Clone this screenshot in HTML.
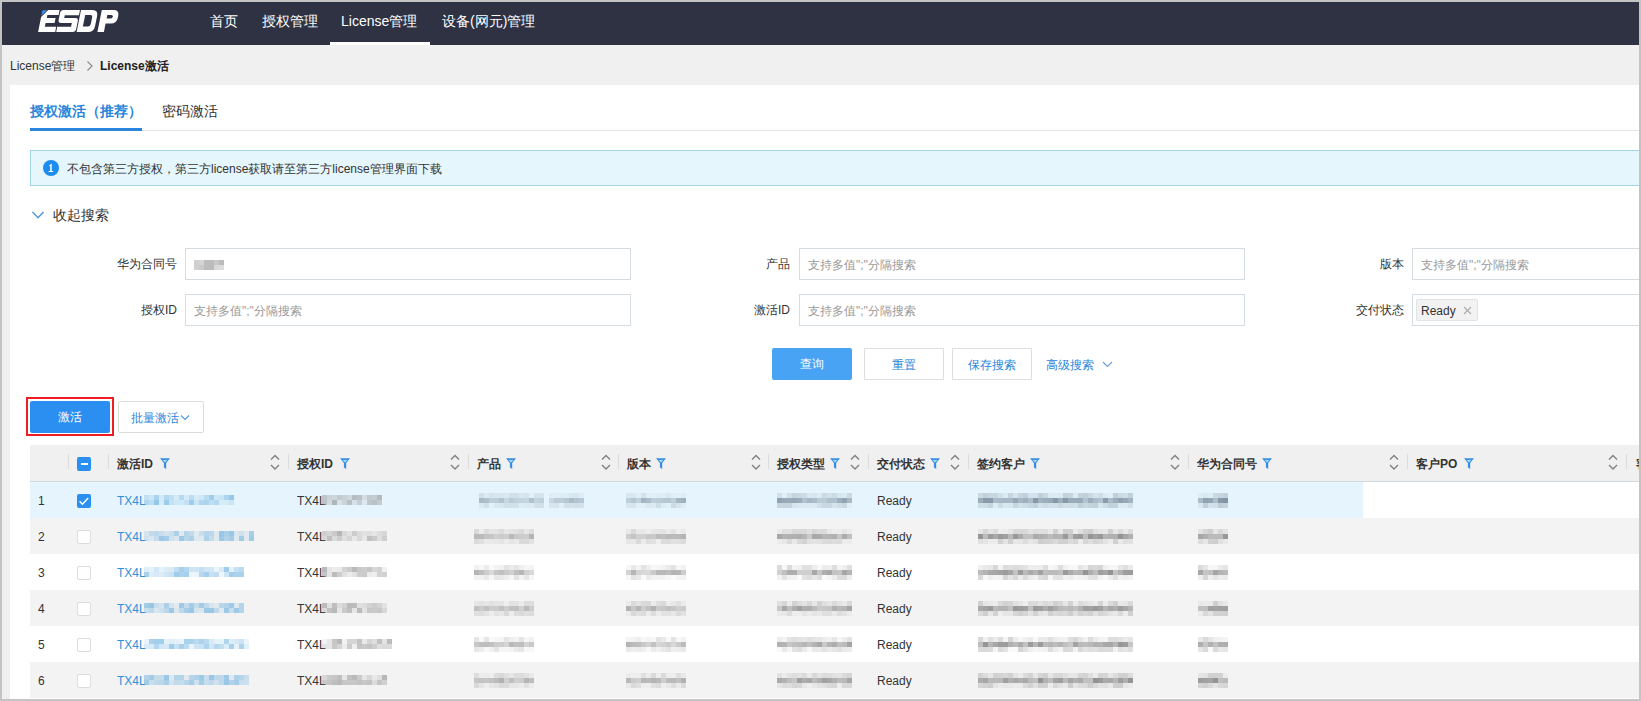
<!DOCTYPE html><html><head><meta charset="utf-8"><style>
*{box-sizing:border-box;margin:0;padding:0}
html,body{width:1641px;height:701px;overflow:hidden;background:#c4c4c4;font-family:"Liberation Sans",sans-serif;}
.abs{position:absolute}
#frame{position:absolute;left:2px;top:2px;width:1637px;height:697px;background:#f0f0f0;overflow:hidden}
#hdr{position:absolute;left:0;top:0;width:1637px;height:43px;background:#2e3243}
.logo{position:absolute;left:36px;top:2px;color:#fff;font:italic bold 30px/38px "Liberation Sans",sans-serif;letter-spacing:-1px}
.nav{position:absolute;top:9px;color:#fff;font-size:14px;line-height:20px;white-space:nowrap}
.navline{position:absolute;left:328px;top:40px;width:100px;height:3px;background:#fff}
.crumb{position:absolute;top:55px;font-size:12px;line-height:18px;color:#333;white-space:nowrap}
#card{position:absolute;left:10px;top:85px;width:1629px;height:614px;background:#fff}
.t{position:absolute;white-space:nowrap}
.mz{position:absolute;filter:blur(0.6px)}
.inp{position:absolute;height:32px;border:1px solid #d6dde2;background:#fff;border-radius:0}
.ph{position:absolute;left:8px;top:8px;font-size:12px;line-height:16px;color:#9a9a9a;white-space:nowrap}
.lbl{position:absolute;font-size:12px;line-height:16px;color:#333;text-align:right;white-space:nowrap}
.btn{position:absolute;height:32px;font-size:12px;line-height:30px;text-align:center;border-radius:2px;white-space:nowrap;padding-top:1px}
.th{position:absolute;top:0;height:36px;font-size:12px;font-weight:bold;color:#333;line-height:36px}
.sep{position:absolute;width:1px;height:15px;background:#dcdcdc}
.row{position:absolute;left:0;width:1629px;height:36px}
.cell{position:absolute;font-size:12px;line-height:16px;white-space:nowrap}
</style></head><body><div id="frame"><div id="hdr"><svg class="abs" style="left:-2px;top:-2px" width="130" height="44"><g transform="translate(0,10) matrix(1,0,-0.2,1,0,0)"><path fill="#3d8ff0" d="M42.6 0.3 H47.2 L42.6 5.6 Z"/><path fill="#fdfdfd" fill-rule="evenodd" d="M48.2 0 H59.6 V5 H48.4 V7.9 H57.2 V13 H48.2 V16.8 H59.6 V22 H42.5 V6.9 Z M63.6 0 H80 V5.2 H65.8 V7.9 H77 Q80 7.9 80 10.9 V19 Q80 22 77 22 H60.6 V16.8 H74.4 V13 H63.6 Q60.6 12.8 60.6 9.8 V3 Q60.6 0 63.6 0 Z M81 0 H92.5 Q98.3 0 98.3 6 V16 Q98.3 22 92.5 22 H81 Z M86.2 5 H91.5 Q93.6 5 93.6 7.5 V14 Q93.6 16.6 91 16.6 H86.2 Z M101.8 0 H113.6 Q119.4 0 119.4 5.8 V7.8 Q119.4 13.6 113.6 13.6 H108.3 V22 H101.8 Z M108.3 5 H112.2 Q114.2 5 114.2 6.7 Q114.2 8.4 112.2 8.4 H108.3 Z"/></g></svg><div class="nav" style="left:208px">首页</div><div class="nav" style="left:260px">授权管理</div><div class="nav" style="left:339px">License管理</div><div class="nav" style="left:440px">设备(网元)管理</div><div class="navline"></div></div><div class="crumb" style="left:8px">License管理</div><svg class="abs" style="left:84px;top:58px" width="8" height="12"><path d="M1.5 1.5 L6 6 L1.5 10.5" fill="none" stroke="#888" stroke-width="1.1"/></svg><div class="crumb" style="left:98px;font-weight:bold;color:#222">License激活</div></div><div id="card"></div><div class="t" style="left:30px;top:102px;font-size:14px;line-height:18px;color:#2a86dc;font-weight:bold">授权激活（推荐）</div><div class="t" style="left:162px;top:102px;font-size:14px;line-height:18px;color:#333">密码激活</div><div class="abs" style="left:30px;top:130px;width:1611px;height:1px;background:#e4e4e4"></div><div class="abs" style="left:30px;top:128px;width:112px;height:3px;background:#2a86dc"></div><div class="abs" style="left:30px;top:150px;width:1620px;height:36px;background:#e5f6fc;border:1px solid #a3d6e8"></div><svg class="abs" style="left:43px;top:160px" width="16" height="16"><circle cx="8" cy="8" r="8" fill="#1d8cf0"/><path d="M6.3 5.3 L8.7 3.6 V10.9 H10.2 V12.1 H5.6 V10.9 H7.2 V6.1 L6.3 6.3 Z" fill="#fff"/></svg><div class="t" style="left:67px;top:161px;font-size:12px;line-height:16px;color:#333">不包含第三方授权，第三方license获取请至第三方license管理界面下载</div><svg class="abs" style="left:31px;top:210px" width="14" height="11"><path d="M1.5 2 L7 7.8 L12.5 2" fill="none" stroke="#4f95d6" stroke-width="1.4"/></svg><div class="t" style="left:53px;top:207px;font-size:13.6px;line-height:18px;color:#333">收起搜索</div><div class="lbl" style="right:1464px;top:256px">华为合同号</div><div class="inp" style="left:185px;top:248px;width:446px"></div><svg class="mz" style="left:194px;top:260px" width="30" height="10"><rect x="0" y="0" width="5" height="5" fill="#d0d0d0"/><rect x="5" y="0" width="5" height="5" fill="#d5d5d5"/><rect x="10" y="0" width="5" height="5" fill="#bdbdbd"/><rect x="15" y="0" width="5" height="5" fill="#bdbdbd"/><rect x="20" y="0" width="5" height="5" fill="#c8c8c8"/><rect x="25" y="0" width="5" height="5" fill="#bcbcbc"/><rect x="0" y="5" width="5" height="5" fill="#d0d0d0"/><rect x="5" y="5" width="5" height="5" fill="#cacaca"/><rect x="10" y="5" width="5" height="5" fill="#bdbdbd"/><rect x="15" y="5" width="5" height="5" fill="#bababa"/><rect x="20" y="5" width="5" height="5" fill="#dadada"/><rect x="25" y="5" width="5" height="5" fill="#dcdcdc"/></svg><div class="lbl" style="right:1464px;top:302px">授权ID</div><div class="inp" style="left:185px;top:294px;width:446px"><div class="ph">支持多值";"分隔搜索</div></div><div class="lbl" style="right:851px;top:256px">产品</div><div class="inp" style="left:799px;top:248px;width:446px"><div class="ph">支持多值";"分隔搜索</div></div><div class="lbl" style="right:851px;top:302px">激活ID</div><div class="inp" style="left:799px;top:294px;width:446px"><div class="ph">支持多值";"分隔搜索</div></div><div class="lbl" style="right:237px;top:256px">版本</div><div class="inp" style="left:1412px;top:248px;width:240px"><div class="ph">支持多值";"分隔搜索</div></div><div class="lbl" style="right:237px;top:302px">交付状态</div><div class="inp" style="left:1412px;top:294px;width:240px"><div class="abs" style="left:3px;top:4px;width:62px;height:22px;background:#f2f2f2;border:1px solid #e3e3e3;border-radius:2px"></div><div class="t" style="left:8px;top:8px;font-size:12px;line-height:16px;color:#333">Ready</div><svg class="abs" style="left:50px;top:11px" width="9" height="9"><path d="M1 1 L8 8 M8 1 L1 8" stroke="#aaa" stroke-width="1.1"/></svg></div><div class="btn" style="left:772px;top:348px;width:80px;background:#48a3f5;color:#fff;line-height:31px">查询</div><div class="btn" style="left:864px;top:348px;width:80px;border:1px solid #dedede;border-radius:0;color:#2a86dc;background:#fff">重置</div><div class="btn" style="left:952px;top:348px;width:80px;border:1px solid #dedede;border-radius:0;color:#2a86dc;background:#fff">保存搜索</div><div class="t" style="left:1046px;top:357px;font-size:12px;line-height:16px;color:#2a86dc">高级搜索</div><svg class="abs" style="left:1102px;top:361px" width="11" height="7"><path d="M1 1 L5.5 5.5 L10 1" fill="none" stroke="#6d9ccc" stroke-width="1.1"/></svg><div class="abs" style="left:26px;top:397px;width:88px;height:39px;border:2px solid #ee1c25"></div><div class="btn" style="left:30px;top:401px;width:80px;background:#2a8ff0;color:#fff;line-height:31px">激活</div><div class="btn" style="left:118px;top:401px;width:86px;border:1px solid #dcdcdc;color:#2a86dc;background:#fff;text-align:left;padding-left:12px">批量激活<svg style="position:absolute;left:61px;top:12px" width="10" height="8"><path d="M1 1.5 L5 5.5 L9 1.5" fill="none" stroke="#4a9ae0" stroke-width="1.1"/></svg></div><div class="abs" style="left:30px;top:445px;width:1611px;height:37px;background:#f0f0f0;border-bottom:1px solid #cfd9de"></div><div class="sep" style="left:68px;top:454px"></div><div class="sep" style="left:108px;top:454px"></div><div class="sep" style="left:288px;top:454px"></div><div class="sep" style="left:468px;top:454px"></div><div class="sep" style="left:618px;top:454px"></div><div class="sep" style="left:768px;top:454px"></div><div class="sep" style="left:868px;top:454px"></div><div class="sep" style="left:968px;top:454px"></div><div class="sep" style="left:1188px;top:454px"></div><div class="sep" style="left:1407px;top:454px"></div><div class="sep" style="left:1626px;top:454px"></div><div class="abs" style="left:77px;top:457px;width:14px;height:14px;background:#2a8ff0;border-radius:2px"></div><div class="abs" style="left:80.5px;top:463px;width:7px;height:2px;background:#fff"></div><div class="t" style="left:117px;top:455px;font-size:12px;line-height:18px;font-weight:bold;color:#333">激活ID</div><svg class="abs" style="left:160px;top:458px" width="10" height="11" viewBox="0 0 10 11"><path d="M0 0.3 H10 L6.2 5 V11 L3.9 9.6 V5 Z" fill="#3a8ee0"/><path d="M2.6 2 H7.4 L5 4.6 Z" fill="#9fdcf5"/></svg><svg class="abs" style="left:270px;top:454px" width="10" height="17" viewBox="0 0 10 17"><path d="M1 5.5 L5 1.5 L9 5.5 M1 11 L5 15 L9 11" fill="none" stroke="#808080" stroke-width="1.4"/></svg><div class="t" style="left:297px;top:455px;font-size:12px;line-height:18px;font-weight:bold;color:#333">授权ID</div><svg class="abs" style="left:340px;top:458px" width="10" height="11" viewBox="0 0 10 11"><path d="M0 0.3 H10 L6.2 5 V11 L3.9 9.6 V5 Z" fill="#3a8ee0"/><path d="M2.6 2 H7.4 L5 4.6 Z" fill="#9fdcf5"/></svg><svg class="abs" style="left:450px;top:454px" width="10" height="17" viewBox="0 0 10 17"><path d="M1 5.5 L5 1.5 L9 5.5 M1 11 L5 15 L9 11" fill="none" stroke="#808080" stroke-width="1.4"/></svg><div class="t" style="left:477px;top:455px;font-size:12px;line-height:18px;font-weight:bold;color:#333">产品</div><svg class="abs" style="left:506px;top:458px" width="10" height="11" viewBox="0 0 10 11"><path d="M0 0.3 H10 L6.2 5 V11 L3.9 9.6 V5 Z" fill="#3a8ee0"/><path d="M2.6 2 H7.4 L5 4.6 Z" fill="#9fdcf5"/></svg><svg class="abs" style="left:601px;top:454px" width="10" height="17" viewBox="0 0 10 17"><path d="M1 5.5 L5 1.5 L9 5.5 M1 11 L5 15 L9 11" fill="none" stroke="#808080" stroke-width="1.4"/></svg><div class="t" style="left:627px;top:455px;font-size:12px;line-height:18px;font-weight:bold;color:#333">版本</div><svg class="abs" style="left:656px;top:458px" width="10" height="11" viewBox="0 0 10 11"><path d="M0 0.3 H10 L6.2 5 V11 L3.9 9.6 V5 Z" fill="#3a8ee0"/><path d="M2.6 2 H7.4 L5 4.6 Z" fill="#9fdcf5"/></svg><svg class="abs" style="left:751px;top:454px" width="10" height="17" viewBox="0 0 10 17"><path d="M1 5.5 L5 1.5 L9 5.5 M1 11 L5 15 L9 11" fill="none" stroke="#808080" stroke-width="1.4"/></svg><div class="t" style="left:777px;top:455px;font-size:12px;line-height:18px;font-weight:bold;color:#333">授权类型</div><svg class="abs" style="left:830px;top:458px" width="10" height="11" viewBox="0 0 10 11"><path d="M0 0.3 H10 L6.2 5 V11 L3.9 9.6 V5 Z" fill="#3a8ee0"/><path d="M2.6 2 H7.4 L5 4.6 Z" fill="#9fdcf5"/></svg><svg class="abs" style="left:850px;top:454px" width="10" height="17" viewBox="0 0 10 17"><path d="M1 5.5 L5 1.5 L9 5.5 M1 11 L5 15 L9 11" fill="none" stroke="#808080" stroke-width="1.4"/></svg><div class="t" style="left:877px;top:455px;font-size:12px;line-height:18px;font-weight:bold;color:#333">交付状态</div><svg class="abs" style="left:930px;top:458px" width="10" height="11" viewBox="0 0 10 11"><path d="M0 0.3 H10 L6.2 5 V11 L3.9 9.6 V5 Z" fill="#3a8ee0"/><path d="M2.6 2 H7.4 L5 4.6 Z" fill="#9fdcf5"/></svg><svg class="abs" style="left:950px;top:454px" width="10" height="17" viewBox="0 0 10 17"><path d="M1 5.5 L5 1.5 L9 5.5 M1 11 L5 15 L9 11" fill="none" stroke="#808080" stroke-width="1.4"/></svg><div class="t" style="left:977px;top:455px;font-size:12px;line-height:18px;font-weight:bold;color:#333">签约客户</div><svg class="abs" style="left:1030px;top:458px" width="10" height="11" viewBox="0 0 10 11"><path d="M0 0.3 H10 L6.2 5 V11 L3.9 9.6 V5 Z" fill="#3a8ee0"/><path d="M2.6 2 H7.4 L5 4.6 Z" fill="#9fdcf5"/></svg><svg class="abs" style="left:1170px;top:454px" width="10" height="17" viewBox="0 0 10 17"><path d="M1 5.5 L5 1.5 L9 5.5 M1 11 L5 15 L9 11" fill="none" stroke="#808080" stroke-width="1.4"/></svg><div class="t" style="left:1197px;top:455px;font-size:12px;line-height:18px;font-weight:bold;color:#333">华为合同号</div><svg class="abs" style="left:1262px;top:458px" width="10" height="11" viewBox="0 0 10 11"><path d="M0 0.3 H10 L6.2 5 V11 L3.9 9.6 V5 Z" fill="#3a8ee0"/><path d="M2.6 2 H7.4 L5 4.6 Z" fill="#9fdcf5"/></svg><svg class="abs" style="left:1389px;top:454px" width="10" height="17" viewBox="0 0 10 17"><path d="M1 5.5 L5 1.5 L9 5.5 M1 11 L5 15 L9 11" fill="none" stroke="#808080" stroke-width="1.4"/></svg><div class="t" style="left:1416px;top:455px;font-size:12px;line-height:18px;font-weight:bold;color:#333">客户PO</div><svg class="abs" style="left:1464px;top:458px" width="10" height="11" viewBox="0 0 10 11"><path d="M0 0.3 H10 L6.2 5 V11 L3.9 9.6 V5 Z" fill="#3a8ee0"/><path d="M2.6 2 H7.4 L5 4.6 Z" fill="#9fdcf5"/></svg><svg class="abs" style="left:1608px;top:454px" width="10" height="17" viewBox="0 0 10 17"><path d="M1 5.5 L5 1.5 L9 5.5 M1 11 L5 15 L9 11" fill="none" stroke="#808080" stroke-width="1.4"/></svg><div class="t" style="left:1636px;top:455px;font-size:12px;line-height:18px;font-weight:bold;color:#333">客</div><div class="abs" style="left:30px;top:482px;width:1333px;height:36px;background:#e6f5fd"></div><div class="cell" style="left:38px;top:493px;color:#333">1</div><div class="abs" style="left:77px;top:494px;width:14px;height:14px;background:#2a8ff0;border-radius:2px"></div><svg class="abs" style="left:77px;top:494px" width="14" height="14"><path d="M2.6 7.3 L5.4 10.2 L11.2 4" fill="none" stroke="#fff" stroke-width="1.5"/></svg><div class="cell" style="left:117px;top:493px;color:#2f8fd9">TX4L</div><svg class="mz" style="left:144px;top:495px" width="90" height="10"><g fill="#5aa8dc"><rect x="0" y="0" width="5" height="5" fill-opacity="0.26"/><rect x="5" y="0" width="5" height="5" fill-opacity="0.18"/><rect x="10" y="0" width="5" height="5" fill-opacity="0.43"/><rect x="15" y="0" width="5" height="5" fill-opacity="0.14"/><rect x="20" y="0" width="5" height="5" fill-opacity="0.37"/><rect x="25" y="0" width="5" height="5" fill-opacity="0.28"/><rect x="30" y="0" width="5" height="5" fill-opacity="0.13"/><rect x="35" y="0" width="5" height="5" fill-opacity="0.35"/><rect x="40" y="0" width="5" height="5" fill-opacity="0.12"/><rect x="45" y="0" width="5" height="5" fill-opacity="0.32"/><rect x="50" y="0" width="5" height="5" fill-opacity="0.13"/><rect x="55" y="0" width="5" height="5" fill-opacity="0.15"/><rect x="60" y="0" width="5" height="5" fill-opacity="0.31"/><rect x="65" y="0" width="5" height="5" fill-opacity="0.51"/><rect x="70" y="0" width="5" height="5" fill-opacity="0.16"/><rect x="75" y="0" width="5" height="5" fill-opacity="0.21"/><rect x="80" y="0" width="5" height="5" fill-opacity="0.41"/><rect x="85" y="0" width="5" height="5" fill-opacity="0.57"/><rect x="0" y="5" width="5" height="5" fill-opacity="0.39"/><rect x="5" y="5" width="5" height="5" fill-opacity="0.30"/><rect x="10" y="5" width="5" height="5" fill-opacity="0.59"/><rect x="15" y="5" width="5" height="5" fill-opacity="0.12"/><rect x="20" y="5" width="5" height="5" fill-opacity="0.53"/><rect x="25" y="5" width="5" height="5" fill-opacity="0.24"/><rect x="30" y="5" width="5" height="5" fill-opacity="0.17"/><rect x="35" y="5" width="5" height="5" fill-opacity="0.16"/><rect x="40" y="5" width="5" height="5" fill-opacity="0.25"/><rect x="45" y="5" width="5" height="5" fill-opacity="0.51"/><rect x="50" y="5" width="5" height="5" fill-opacity="0.19"/><rect x="55" y="5" width="5" height="5" fill-opacity="0.39"/><rect x="60" y="5" width="5" height="5" fill-opacity="0.42"/><rect x="65" y="5" width="5" height="5" fill-opacity="0.29"/><rect x="70" y="5" width="5" height="5" fill-opacity="0.37"/><rect x="75" y="5" width="5" height="5" fill-opacity="0.13"/><rect x="80" y="5" width="5" height="5" fill-opacity="0.13"/><rect x="85" y="5" width="5" height="5" fill-opacity="0.20"/></g></svg><div class="cell" style="left:297px;top:493px;color:#333">TX4L</div><svg class="mz" style="left:322px;top:495px" width="60" height="10"><g fill="#888"><rect x="0" y="0" width="5" height="5" fill-opacity="0.44"/><rect x="5" y="0" width="5" height="5" fill-opacity="0.31"/><rect x="10" y="0" width="5" height="5" fill-opacity="0.26"/><rect x="15" y="0" width="5" height="5" fill-opacity="0.39"/><rect x="20" y="0" width="5" height="5" fill-opacity="0.33"/><rect x="25" y="0" width="5" height="5" fill-opacity="0.25"/><rect x="30" y="0" width="5" height="5" fill-opacity="0.50"/><rect x="35" y="0" width="5" height="5" fill-opacity="0.45"/><rect x="40" y="0" width="5" height="5" fill-opacity="0.22"/><rect x="45" y="0" width="5" height="5" fill-opacity="0.39"/><rect x="50" y="0" width="5" height="5" fill-opacity="0.36"/><rect x="55" y="0" width="5" height="5" fill-opacity="0.54"/><rect x="0" y="5" width="5" height="5" fill-opacity="0.46"/><rect x="5" y="5" width="5" height="5" fill-opacity="0.24"/><rect x="10" y="5" width="5" height="5" fill-opacity="0.59"/><rect x="15" y="5" width="5" height="5" fill-opacity="0.16"/><rect x="20" y="5" width="5" height="5" fill-opacity="0.31"/><rect x="25" y="5" width="5" height="5" fill-opacity="0.48"/><rect x="30" y="5" width="5" height="5" fill-opacity="0.18"/><rect x="35" y="5" width="5" height="5" fill-opacity="0.34"/><rect x="40" y="5" width="5" height="5" fill-opacity="0.12"/><rect x="45" y="5" width="5" height="5" fill-opacity="0.43"/><rect x="50" y="5" width="5" height="5" fill-opacity="0.48"/><rect x="55" y="5" width="5" height="5" fill-opacity="0.39"/></g></svg><svg class="mz" style="left:479px;top:493px" width="65" height="15"><g fill="#789"><rect x="0" y="0" width="5" height="5" fill-opacity="0.19"/><rect x="5" y="0" width="5" height="5" fill-opacity="0.09"/><rect x="10" y="0" width="5" height="5" fill-opacity="0.16"/><rect x="15" y="0" width="5" height="5" fill-opacity="0.14"/><rect x="20" y="0" width="5" height="5" fill-opacity="0.13"/><rect x="25" y="0" width="5" height="5" fill-opacity="0.11"/><rect x="30" y="0" width="5" height="5" fill-opacity="0.18"/><rect x="35" y="0" width="5" height="5" fill-opacity="0.20"/><rect x="40" y="0" width="5" height="5" fill-opacity="0.12"/><rect x="45" y="0" width="5" height="5" fill-opacity="0.15"/><rect x="50" y="0" width="5" height="5" fill-opacity="0.04"/><rect x="55" y="0" width="5" height="5" fill-opacity="0.16"/><rect x="60" y="0" width="5" height="5" fill-opacity="0.15"/><rect x="0" y="5" width="5" height="5" fill-opacity="0.54"/><rect x="5" y="5" width="5" height="5" fill-opacity="0.49"/><rect x="10" y="5" width="5" height="5" fill-opacity="0.35"/><rect x="15" y="5" width="5" height="5" fill-opacity="0.37"/><rect x="20" y="5" width="5" height="5" fill-opacity="0.45"/><rect x="25" y="5" width="5" height="5" fill-opacity="0.28"/><rect x="30" y="5" width="5" height="5" fill-opacity="0.39"/><rect x="35" y="5" width="5" height="5" fill-opacity="0.32"/><rect x="40" y="5" width="5" height="5" fill-opacity="0.30"/><rect x="45" y="5" width="5" height="5" fill-opacity="0.29"/><rect x="50" y="5" width="5" height="5" fill-opacity="0.48"/><rect x="55" y="5" width="5" height="5" fill-opacity="0.30"/><rect x="60" y="5" width="5" height="5" fill-opacity="0.34"/><rect x="0" y="10" width="5" height="5" fill-opacity="0.10"/><rect x="5" y="10" width="5" height="5" fill-opacity="0.19"/><rect x="10" y="10" width="5" height="5" fill-opacity="0.04"/><rect x="15" y="10" width="5" height="5" fill-opacity="0.11"/><rect x="20" y="10" width="5" height="5" fill-opacity="0.13"/><rect x="25" y="10" width="5" height="5" fill-opacity="0.19"/><rect x="30" y="10" width="5" height="5" fill-opacity="0.18"/><rect x="35" y="10" width="5" height="5" fill-opacity="0.19"/><rect x="40" y="10" width="5" height="5" fill-opacity="0.08"/><rect x="45" y="10" width="5" height="5" fill-opacity="0.10"/><rect x="50" y="10" width="5" height="5" fill-opacity="0.09"/><rect x="55" y="10" width="5" height="5" fill-opacity="0.19"/><rect x="60" y="10" width="5" height="5" fill-opacity="0.20"/></g></svg><svg class="mz" style="left:549px;top:493px" width="35" height="15"><g fill="#789"><rect x="0" y="0" width="5" height="5" fill-opacity="0.06"/><rect x="5" y="0" width="5" height="5" fill-opacity="0.06"/><rect x="10" y="0" width="5" height="5" fill-opacity="0.07"/><rect x="15" y="0" width="5" height="5" fill-opacity="0.07"/><rect x="20" y="0" width="5" height="5" fill-opacity="0.12"/><rect x="25" y="0" width="5" height="5" fill-opacity="0.14"/><rect x="30" y="0" width="5" height="5" fill-opacity="0.08"/><rect x="0" y="5" width="5" height="5" fill-opacity="0.27"/><rect x="5" y="5" width="5" height="5" fill-opacity="0.38"/><rect x="10" y="5" width="5" height="5" fill-opacity="0.37"/><rect x="15" y="5" width="5" height="5" fill-opacity="0.42"/><rect x="20" y="5" width="5" height="5" fill-opacity="0.53"/><rect x="25" y="5" width="5" height="5" fill-opacity="0.46"/><rect x="30" y="5" width="5" height="5" fill-opacity="0.41"/><rect x="0" y="10" width="5" height="5" fill-opacity="0.14"/><rect x="5" y="10" width="5" height="5" fill-opacity="0.15"/><rect x="10" y="10" width="5" height="5" fill-opacity="0.04"/><rect x="15" y="10" width="5" height="5" fill-opacity="0.19"/><rect x="20" y="10" width="5" height="5" fill-opacity="0.17"/><rect x="25" y="10" width="5" height="5" fill-opacity="0.19"/><rect x="30" y="10" width="5" height="5" fill-opacity="0.17"/></g></svg><svg class="mz" style="left:626px;top:493px" width="60" height="15"><g fill="#789"><rect x="0" y="0" width="5" height="5" fill-opacity="0.12"/><rect x="5" y="0" width="5" height="5" fill-opacity="0.12"/><rect x="10" y="0" width="5" height="5" fill-opacity="0.06"/><rect x="15" y="0" width="5" height="5" fill-opacity="0.17"/><rect x="20" y="0" width="5" height="5" fill-opacity="0.05"/><rect x="25" y="0" width="5" height="5" fill-opacity="0.05"/><rect x="30" y="0" width="5" height="5" fill-opacity="0.08"/><rect x="35" y="0" width="5" height="5" fill-opacity="0.07"/><rect x="40" y="0" width="5" height="5" fill-opacity="0.11"/><rect x="45" y="0" width="5" height="5" fill-opacity="0.05"/><rect x="50" y="0" width="5" height="5" fill-opacity="0.04"/><rect x="55" y="0" width="5" height="5" fill-opacity="0.07"/><rect x="0" y="5" width="5" height="5" fill-opacity="0.35"/><rect x="5" y="5" width="5" height="5" fill-opacity="0.43"/><rect x="10" y="5" width="5" height="5" fill-opacity="0.32"/><rect x="15" y="5" width="5" height="5" fill-opacity="0.59"/><rect x="20" y="5" width="5" height="5" fill-opacity="0.51"/><rect x="25" y="5" width="5" height="5" fill-opacity="0.36"/><rect x="30" y="5" width="5" height="5" fill-opacity="0.39"/><rect x="35" y="5" width="5" height="5" fill-opacity="0.42"/><rect x="40" y="5" width="5" height="5" fill-opacity="0.43"/><rect x="45" y="5" width="5" height="5" fill-opacity="0.35"/><rect x="50" y="5" width="5" height="5" fill-opacity="0.58"/><rect x="55" y="5" width="5" height="5" fill-opacity="0.63"/><rect x="0" y="10" width="5" height="5" fill-opacity="0.13"/><rect x="5" y="10" width="5" height="5" fill-opacity="0.14"/><rect x="10" y="10" width="5" height="5" fill-opacity="0.05"/><rect x="15" y="10" width="5" height="5" fill-opacity="0.06"/><rect x="20" y="10" width="5" height="5" fill-opacity="0.11"/><rect x="25" y="10" width="5" height="5" fill-opacity="0.09"/><rect x="30" y="10" width="5" height="5" fill-opacity="0.21"/><rect x="35" y="10" width="5" height="5" fill-opacity="0.07"/><rect x="40" y="10" width="5" height="5" fill-opacity="0.04"/><rect x="45" y="10" width="5" height="5" fill-opacity="0.23"/><rect x="50" y="10" width="5" height="5" fill-opacity="0.15"/><rect x="55" y="10" width="5" height="5" fill-opacity="0.07"/></g></svg><svg class="mz" style="left:777px;top:493px" width="75" height="15"><g fill="#789"><rect x="0" y="0" width="5" height="5" fill-opacity="0.18"/><rect x="5" y="0" width="5" height="5" fill-opacity="0.05"/><rect x="10" y="0" width="5" height="5" fill-opacity="0.18"/><rect x="15" y="0" width="5" height="5" fill-opacity="0.29"/><rect x="20" y="0" width="5" height="5" fill-opacity="0.26"/><rect x="25" y="0" width="5" height="5" fill-opacity="0.22"/><rect x="30" y="0" width="5" height="5" fill-opacity="0.11"/><rect x="35" y="0" width="5" height="5" fill-opacity="0.14"/><rect x="40" y="0" width="5" height="5" fill-opacity="0.09"/><rect x="45" y="0" width="5" height="5" fill-opacity="0.24"/><rect x="50" y="0" width="5" height="5" fill-opacity="0.18"/><rect x="55" y="0" width="5" height="5" fill-opacity="0.24"/><rect x="60" y="0" width="5" height="5" fill-opacity="0.13"/><rect x="65" y="0" width="5" height="5" fill-opacity="0.10"/><rect x="70" y="0" width="5" height="5" fill-opacity="0.25"/><rect x="0" y="5" width="5" height="5" fill-opacity="0.76"/><rect x="5" y="5" width="5" height="5" fill-opacity="0.71"/><rect x="10" y="5" width="5" height="5" fill-opacity="0.69"/><rect x="15" y="5" width="5" height="5" fill-opacity="0.70"/><rect x="20" y="5" width="5" height="5" fill-opacity="0.67"/><rect x="25" y="5" width="5" height="5" fill-opacity="0.47"/><rect x="30" y="5" width="5" height="5" fill-opacity="0.58"/><rect x="35" y="5" width="5" height="5" fill-opacity="0.52"/><rect x="40" y="5" width="5" height="5" fill-opacity="0.39"/><rect x="45" y="5" width="5" height="5" fill-opacity="0.39"/><rect x="50" y="5" width="5" height="5" fill-opacity="0.49"/><rect x="55" y="5" width="5" height="5" fill-opacity="0.48"/><rect x="60" y="5" width="5" height="5" fill-opacity="0.65"/><rect x="65" y="5" width="5" height="5" fill-opacity="0.75"/><rect x="70" y="5" width="5" height="5" fill-opacity="0.55"/><rect x="0" y="10" width="5" height="5" fill-opacity="0.28"/><rect x="5" y="10" width="5" height="5" fill-opacity="0.29"/><rect x="10" y="10" width="5" height="5" fill-opacity="0.29"/><rect x="15" y="10" width="5" height="5" fill-opacity="0.14"/><rect x="20" y="10" width="5" height="5" fill-opacity="0.10"/><rect x="25" y="10" width="5" height="5" fill-opacity="0.10"/><rect x="30" y="10" width="5" height="5" fill-opacity="0.09"/><rect x="35" y="10" width="5" height="5" fill-opacity="0.09"/><rect x="40" y="10" width="5" height="5" fill-opacity="0.20"/><rect x="45" y="10" width="5" height="5" fill-opacity="0.27"/><rect x="50" y="10" width="5" height="5" fill-opacity="0.26"/><rect x="55" y="10" width="5" height="5" fill-opacity="0.16"/><rect x="60" y="10" width="5" height="5" fill-opacity="0.21"/><rect x="65" y="10" width="5" height="5" fill-opacity="0.25"/><rect x="70" y="10" width="5" height="5" fill-opacity="0.06"/></g></svg><div class="cell" style="left:877px;top:493px;color:#333">Ready</div><svg class="mz" style="left:978px;top:493px" width="155" height="15"><g fill="#789"><rect x="0" y="0" width="5" height="5" fill-opacity="0.25"/><rect x="5" y="0" width="5" height="5" fill-opacity="0.32"/><rect x="10" y="0" width="5" height="5" fill-opacity="0.28"/><rect x="15" y="0" width="5" height="5" fill-opacity="0.28"/><rect x="20" y="0" width="5" height="5" fill-opacity="0.19"/><rect x="25" y="0" width="5" height="5" fill-opacity="0.10"/><rect x="30" y="0" width="5" height="5" fill-opacity="0.29"/><rect x="35" y="0" width="5" height="5" fill-opacity="0.15"/><rect x="40" y="0" width="5" height="5" fill-opacity="0.29"/><rect x="45" y="0" width="5" height="5" fill-opacity="0.34"/><rect x="50" y="0" width="5" height="5" fill-opacity="0.17"/><rect x="55" y="0" width="5" height="5" fill-opacity="0.17"/><rect x="60" y="0" width="5" height="5" fill-opacity="0.33"/><rect x="65" y="0" width="5" height="5" fill-opacity="0.27"/><rect x="70" y="0" width="5" height="5" fill-opacity="0.10"/><rect x="75" y="0" width="5" height="5" fill-opacity="0.09"/><rect x="80" y="0" width="5" height="5" fill-opacity="0.10"/><rect x="85" y="0" width="5" height="5" fill-opacity="0.32"/><rect x="90" y="0" width="5" height="5" fill-opacity="0.29"/><rect x="95" y="0" width="5" height="5" fill-opacity="0.09"/><rect x="100" y="0" width="5" height="5" fill-opacity="0.30"/><rect x="105" y="0" width="5" height="5" fill-opacity="0.34"/><rect x="110" y="0" width="5" height="5" fill-opacity="0.25"/><rect x="115" y="0" width="5" height="5" fill-opacity="0.16"/><rect x="120" y="0" width="5" height="5" fill-opacity="0.21"/><rect x="125" y="0" width="5" height="5" fill-opacity="0.09"/><rect x="130" y="0" width="5" height="5" fill-opacity="0.05"/><rect x="135" y="0" width="5" height="5" fill-opacity="0.34"/><rect x="140" y="0" width="5" height="5" fill-opacity="0.24"/><rect x="145" y="0" width="5" height="5" fill-opacity="0.21"/><rect x="150" y="0" width="5" height="5" fill-opacity="0.33"/><rect x="0" y="5" width="5" height="5" fill-opacity="0.65"/><rect x="5" y="5" width="5" height="5" fill-opacity="0.84"/><rect x="10" y="5" width="5" height="5" fill-opacity="0.82"/><rect x="15" y="5" width="5" height="5" fill-opacity="0.54"/><rect x="20" y="5" width="5" height="5" fill-opacity="0.56"/><rect x="25" y="5" width="5" height="5" fill-opacity="0.58"/><rect x="30" y="5" width="5" height="5" fill-opacity="0.56"/><rect x="35" y="5" width="5" height="5" fill-opacity="0.71"/><rect x="40" y="5" width="5" height="5" fill-opacity="0.57"/><rect x="45" y="5" width="5" height="5" fill-opacity="0.64"/><rect x="50" y="5" width="5" height="5" fill-opacity="0.51"/><rect x="55" y="5" width="5" height="5" fill-opacity="0.86"/><rect x="60" y="5" width="5" height="5" fill-opacity="0.61"/><rect x="65" y="5" width="5" height="5" fill-opacity="0.66"/><rect x="70" y="5" width="5" height="5" fill-opacity="0.71"/><rect x="75" y="5" width="5" height="5" fill-opacity="0.86"/><rect x="80" y="5" width="5" height="5" fill-opacity="0.64"/><rect x="85" y="5" width="5" height="5" fill-opacity="0.86"/><rect x="90" y="5" width="5" height="5" fill-opacity="0.68"/><rect x="95" y="5" width="5" height="5" fill-opacity="0.69"/><rect x="100" y="5" width="5" height="5" fill-opacity="0.69"/><rect x="105" y="5" width="5" height="5" fill-opacity="0.46"/><rect x="110" y="5" width="5" height="5" fill-opacity="0.65"/><rect x="115" y="5" width="5" height="5" fill-opacity="0.53"/><rect x="120" y="5" width="5" height="5" fill-opacity="0.45"/><rect x="125" y="5" width="5" height="5" fill-opacity="0.81"/><rect x="130" y="5" width="5" height="5" fill-opacity="0.53"/><rect x="135" y="5" width="5" height="5" fill-opacity="0.66"/><rect x="140" y="5" width="5" height="5" fill-opacity="0.78"/><rect x="145" y="5" width="5" height="5" fill-opacity="0.70"/><rect x="150" y="5" width="5" height="5" fill-opacity="0.60"/><rect x="0" y="10" width="5" height="5" fill-opacity="0.21"/><rect x="5" y="10" width="5" height="5" fill-opacity="0.22"/><rect x="10" y="10" width="5" height="5" fill-opacity="0.29"/><rect x="15" y="10" width="5" height="5" fill-opacity="0.08"/><rect x="20" y="10" width="5" height="5" fill-opacity="0.22"/><rect x="25" y="10" width="5" height="5" fill-opacity="0.12"/><rect x="30" y="10" width="5" height="5" fill-opacity="0.13"/><rect x="35" y="10" width="5" height="5" fill-opacity="0.28"/><rect x="40" y="10" width="5" height="5" fill-opacity="0.20"/><rect x="45" y="10" width="5" height="5" fill-opacity="0.22"/><rect x="50" y="10" width="5" height="5" fill-opacity="0.28"/><rect x="55" y="10" width="5" height="5" fill-opacity="0.32"/><rect x="60" y="10" width="5" height="5" fill-opacity="0.18"/><rect x="65" y="10" width="5" height="5" fill-opacity="0.23"/><rect x="70" y="10" width="5" height="5" fill-opacity="0.20"/><rect x="75" y="10" width="5" height="5" fill-opacity="0.20"/><rect x="80" y="10" width="5" height="5" fill-opacity="0.26"/><rect x="85" y="10" width="5" height="5" fill-opacity="0.19"/><rect x="90" y="10" width="5" height="5" fill-opacity="0.21"/><rect x="95" y="10" width="5" height="5" fill-opacity="0.19"/><rect x="100" y="10" width="5" height="5" fill-opacity="0.33"/><rect x="105" y="10" width="5" height="5" fill-opacity="0.26"/><rect x="110" y="10" width="5" height="5" fill-opacity="0.31"/><rect x="115" y="10" width="5" height="5" fill-opacity="0.33"/><rect x="120" y="10" width="5" height="5" fill-opacity="0.13"/><rect x="125" y="10" width="5" height="5" fill-opacity="0.22"/><rect x="130" y="10" width="5" height="5" fill-opacity="0.33"/><rect x="135" y="10" width="5" height="5" fill-opacity="0.30"/><rect x="140" y="10" width="5" height="5" fill-opacity="0.09"/><rect x="145" y="10" width="5" height="5" fill-opacity="0.09"/><rect x="150" y="10" width="5" height="5" fill-opacity="0.18"/></g></svg><svg class="mz" style="left:1198px;top:493px" width="30" height="15"><g fill="#789"><rect x="0" y="0" width="5" height="5" fill-opacity="0.07"/><rect x="5" y="0" width="5" height="5" fill-opacity="0.12"/><rect x="10" y="0" width="5" height="5" fill-opacity="0.07"/><rect x="15" y="0" width="5" height="5" fill-opacity="0.25"/><rect x="20" y="0" width="5" height="5" fill-opacity="0.29"/><rect x="25" y="0" width="5" height="5" fill-opacity="0.32"/><rect x="0" y="5" width="5" height="5" fill-opacity="0.52"/><rect x="5" y="5" width="5" height="5" fill-opacity="0.77"/><rect x="10" y="5" width="5" height="5" fill-opacity="0.75"/><rect x="15" y="5" width="5" height="5" fill-opacity="0.51"/><rect x="20" y="5" width="5" height="5" fill-opacity="0.85"/><rect x="25" y="5" width="5" height="5" fill-opacity="0.89"/><rect x="0" y="10" width="5" height="5" fill-opacity="0.12"/><rect x="5" y="10" width="5" height="5" fill-opacity="0.34"/><rect x="10" y="10" width="5" height="5" fill-opacity="0.17"/><rect x="15" y="10" width="5" height="5" fill-opacity="0.20"/><rect x="20" y="10" width="5" height="5" fill-opacity="0.35"/><rect x="25" y="10" width="5" height="5" fill-opacity="0.30"/></g></svg><div class="abs" style="left:30px;top:518px;width:1611px;height:36px;background:#f3f3f3"></div><div class="cell" style="left:38px;top:529px;color:#333">2</div><div class="abs" style="left:77px;top:530px;width:14px;height:14px;background:#fff;border:1px solid #dcdcdc;border-radius:2px"></div><div class="cell" style="left:117px;top:529px;color:#2f8fd9">TX4L</div><svg class="mz" style="left:144px;top:531px" width="110" height="10"><g fill="#5aa8dc"><rect x="0" y="0" width="5" height="5" fill-opacity="0.18"/><rect x="5" y="0" width="5" height="5" fill-opacity="0.32"/><rect x="10" y="0" width="5" height="5" fill-opacity="0.36"/><rect x="15" y="0" width="5" height="5" fill-opacity="0.27"/><rect x="20" y="0" width="5" height="5" fill-opacity="0.20"/><rect x="25" y="0" width="5" height="5" fill-opacity="0.26"/><rect x="30" y="0" width="5" height="5" fill-opacity="0.46"/><rect x="35" y="0" width="5" height="5" fill-opacity="0.11"/><rect x="40" y="0" width="5" height="5" fill-opacity="0.38"/><rect x="45" y="0" width="5" height="5" fill-opacity="0.32"/><rect x="50" y="0" width="5" height="5" fill-opacity="0.11"/><rect x="55" y="0" width="5" height="5" fill-opacity="0.27"/><rect x="60" y="0" width="5" height="5" fill-opacity="0.41"/><rect x="65" y="0" width="5" height="5" fill-opacity="0.36"/><rect x="70" y="0" width="5" height="5" fill-opacity="0.13"/><rect x="75" y="0" width="5" height="5" fill-opacity="0.59"/><rect x="80" y="0" width="5" height="5" fill-opacity="0.49"/><rect x="85" y="0" width="5" height="5" fill-opacity="0.59"/><rect x="90" y="0" width="5" height="5" fill-opacity="0.15"/><rect x="95" y="0" width="5" height="5" fill-opacity="0.23"/><rect x="100" y="0" width="5" height="5" fill-opacity="0.12"/><rect x="105" y="0" width="5" height="5" fill-opacity="0.49"/><rect x="0" y="5" width="5" height="5" fill-opacity="0.24"/><rect x="5" y="5" width="5" height="5" fill-opacity="0.16"/><rect x="10" y="5" width="5" height="5" fill-opacity="0.31"/><rect x="15" y="5" width="5" height="5" fill-opacity="0.56"/><rect x="20" y="5" width="5" height="5" fill-opacity="0.51"/><rect x="25" y="5" width="5" height="5" fill-opacity="0.23"/><rect x="30" y="5" width="5" height="5" fill-opacity="0.17"/><rect x="35" y="5" width="5" height="5" fill-opacity="0.56"/><rect x="40" y="5" width="5" height="5" fill-opacity="0.39"/><rect x="45" y="5" width="5" height="5" fill-opacity="0.45"/><rect x="50" y="5" width="5" height="5" fill-opacity="0.14"/><rect x="55" y="5" width="5" height="5" fill-opacity="0.13"/><rect x="60" y="5" width="5" height="5" fill-opacity="0.44"/><rect x="65" y="5" width="5" height="5" fill-opacity="0.31"/><rect x="70" y="5" width="5" height="5" fill-opacity="0.14"/><rect x="75" y="5" width="5" height="5" fill-opacity="0.57"/><rect x="80" y="5" width="5" height="5" fill-opacity="0.42"/><rect x="85" y="5" width="5" height="5" fill-opacity="0.50"/><rect x="90" y="5" width="5" height="5" fill-opacity="0.14"/><rect x="95" y="5" width="5" height="5" fill-opacity="0.53"/><rect x="100" y="5" width="5" height="5" fill-opacity="0.13"/><rect x="105" y="5" width="5" height="5" fill-opacity="0.53"/></g></svg><div class="cell" style="left:297px;top:529px;color:#333">TX4L</div><svg class="mz" style="left:322px;top:531px" width="65" height="10"><g fill="#888"><rect x="0" y="0" width="5" height="5" fill-opacity="0.33"/><rect x="5" y="0" width="5" height="5" fill-opacity="0.27"/><rect x="10" y="0" width="5" height="5" fill-opacity="0.38"/><rect x="15" y="0" width="5" height="5" fill-opacity="0.56"/><rect x="20" y="0" width="5" height="5" fill-opacity="0.23"/><rect x="25" y="0" width="5" height="5" fill-opacity="0.16"/><rect x="30" y="0" width="5" height="5" fill-opacity="0.36"/><rect x="35" y="0" width="5" height="5" fill-opacity="0.22"/><rect x="40" y="0" width="5" height="5" fill-opacity="0.15"/><rect x="45" y="0" width="5" height="5" fill-opacity="0.18"/><rect x="50" y="0" width="5" height="5" fill-opacity="0.13"/><rect x="55" y="0" width="5" height="5" fill-opacity="0.20"/><rect x="60" y="0" width="5" height="5" fill-opacity="0.26"/><rect x="0" y="5" width="5" height="5" fill-opacity="0.25"/><rect x="5" y="5" width="5" height="5" fill-opacity="0.48"/><rect x="10" y="5" width="5" height="5" fill-opacity="0.24"/><rect x="15" y="5" width="5" height="5" fill-opacity="0.35"/><rect x="20" y="5" width="5" height="5" fill-opacity="0.19"/><rect x="25" y="5" width="5" height="5" fill-opacity="0.27"/><rect x="30" y="5" width="5" height="5" fill-opacity="0.11"/><rect x="35" y="5" width="5" height="5" fill-opacity="0.23"/><rect x="40" y="5" width="5" height="5" fill-opacity="0.11"/><rect x="45" y="5" width="5" height="5" fill-opacity="0.47"/><rect x="50" y="5" width="5" height="5" fill-opacity="0.38"/><rect x="55" y="5" width="5" height="5" fill-opacity="0.19"/><rect x="60" y="5" width="5" height="5" fill-opacity="0.34"/></g></svg><svg class="mz" style="left:474px;top:529px" width="60" height="15"><g fill="#888"><rect x="0" y="0" width="5" height="5" fill-opacity="0.23"/><rect x="5" y="0" width="5" height="5" fill-opacity="0.06"/><rect x="10" y="0" width="5" height="5" fill-opacity="0.21"/><rect x="15" y="0" width="5" height="5" fill-opacity="0.13"/><rect x="20" y="0" width="5" height="5" fill-opacity="0.14"/><rect x="25" y="0" width="5" height="5" fill-opacity="0.21"/><rect x="30" y="0" width="5" height="5" fill-opacity="0.12"/><rect x="35" y="0" width="5" height="5" fill-opacity="0.14"/><rect x="40" y="0" width="5" height="5" fill-opacity="0.18"/><rect x="45" y="0" width="5" height="5" fill-opacity="0.24"/><rect x="50" y="0" width="5" height="5" fill-opacity="0.11"/><rect x="55" y="0" width="5" height="5" fill-opacity="0.21"/><rect x="0" y="5" width="5" height="5" fill-opacity="0.54"/><rect x="5" y="5" width="5" height="5" fill-opacity="0.52"/><rect x="10" y="5" width="5" height="5" fill-opacity="0.44"/><rect x="15" y="5" width="5" height="5" fill-opacity="0.42"/><rect x="20" y="5" width="5" height="5" fill-opacity="0.33"/><rect x="25" y="5" width="5" height="5" fill-opacity="0.36"/><rect x="30" y="5" width="5" height="5" fill-opacity="0.34"/><rect x="35" y="5" width="5" height="5" fill-opacity="0.55"/><rect x="40" y="5" width="5" height="5" fill-opacity="0.40"/><rect x="45" y="5" width="5" height="5" fill-opacity="0.37"/><rect x="50" y="5" width="5" height="5" fill-opacity="0.34"/><rect x="55" y="5" width="5" height="5" fill-opacity="0.58"/><rect x="0" y="10" width="5" height="5" fill-opacity="0.22"/><rect x="5" y="10" width="5" height="5" fill-opacity="0.18"/><rect x="10" y="10" width="5" height="5" fill-opacity="0.09"/><rect x="15" y="10" width="5" height="5" fill-opacity="0.09"/><rect x="20" y="10" width="5" height="5" fill-opacity="0.10"/><rect x="25" y="10" width="5" height="5" fill-opacity="0.13"/><rect x="30" y="10" width="5" height="5" fill-opacity="0.07"/><rect x="35" y="10" width="5" height="5" fill-opacity="0.13"/><rect x="40" y="10" width="5" height="5" fill-opacity="0.09"/><rect x="45" y="10" width="5" height="5" fill-opacity="0.24"/><rect x="50" y="10" width="5" height="5" fill-opacity="0.24"/><rect x="55" y="10" width="5" height="5" fill-opacity="0.15"/></g></svg><svg class="mz" style="left:626px;top:529px" width="60" height="15"><g fill="#888"><rect x="0" y="0" width="5" height="5" fill-opacity="0.09"/><rect x="5" y="0" width="5" height="5" fill-opacity="0.24"/><rect x="10" y="0" width="5" height="5" fill-opacity="0.10"/><rect x="15" y="0" width="5" height="5" fill-opacity="0.11"/><rect x="20" y="0" width="5" height="5" fill-opacity="0.04"/><rect x="25" y="0" width="5" height="5" fill-opacity="0.12"/><rect x="30" y="0" width="5" height="5" fill-opacity="0.13"/><rect x="35" y="0" width="5" height="5" fill-opacity="0.14"/><rect x="40" y="0" width="5" height="5" fill-opacity="0.08"/><rect x="45" y="0" width="5" height="5" fill-opacity="0.14"/><rect x="50" y="0" width="5" height="5" fill-opacity="0.04"/><rect x="55" y="0" width="5" height="5" fill-opacity="0.09"/><rect x="0" y="5" width="5" height="5" fill-opacity="0.34"/><rect x="5" y="5" width="5" height="5" fill-opacity="0.44"/><rect x="10" y="5" width="5" height="5" fill-opacity="0.33"/><rect x="15" y="5" width="5" height="5" fill-opacity="0.32"/><rect x="20" y="5" width="5" height="5" fill-opacity="0.41"/><rect x="25" y="5" width="5" height="5" fill-opacity="0.39"/><rect x="30" y="5" width="5" height="5" fill-opacity="0.50"/><rect x="35" y="5" width="5" height="5" fill-opacity="0.48"/><rect x="40" y="5" width="5" height="5" fill-opacity="0.55"/><rect x="45" y="5" width="5" height="5" fill-opacity="0.52"/><rect x="50" y="5" width="5" height="5" fill-opacity="0.54"/><rect x="55" y="5" width="5" height="5" fill-opacity="0.59"/><rect x="0" y="10" width="5" height="5" fill-opacity="0.12"/><rect x="5" y="10" width="5" height="5" fill-opacity="0.10"/><rect x="10" y="10" width="5" height="5" fill-opacity="0.24"/><rect x="15" y="10" width="5" height="5" fill-opacity="0.07"/><rect x="20" y="10" width="5" height="5" fill-opacity="0.19"/><rect x="25" y="10" width="5" height="5" fill-opacity="0.17"/><rect x="30" y="10" width="5" height="5" fill-opacity="0.04"/><rect x="35" y="10" width="5" height="5" fill-opacity="0.21"/><rect x="40" y="10" width="5" height="5" fill-opacity="0.22"/><rect x="45" y="10" width="5" height="5" fill-opacity="0.17"/><rect x="50" y="10" width="5" height="5" fill-opacity="0.19"/><rect x="55" y="10" width="5" height="5" fill-opacity="0.21"/></g></svg><svg class="mz" style="left:777px;top:529px" width="75" height="15"><g fill="#888"><rect x="0" y="0" width="5" height="5" fill-opacity="0.08"/><rect x="5" y="0" width="5" height="5" fill-opacity="0.18"/><rect x="10" y="0" width="5" height="5" fill-opacity="0.17"/><rect x="15" y="0" width="5" height="5" fill-opacity="0.26"/><rect x="20" y="0" width="5" height="5" fill-opacity="0.25"/><rect x="25" y="0" width="5" height="5" fill-opacity="0.25"/><rect x="30" y="0" width="5" height="5" fill-opacity="0.19"/><rect x="35" y="0" width="5" height="5" fill-opacity="0.27"/><rect x="40" y="0" width="5" height="5" fill-opacity="0.22"/><rect x="45" y="0" width="5" height="5" fill-opacity="0.22"/><rect x="50" y="0" width="5" height="5" fill-opacity="0.10"/><rect x="55" y="0" width="5" height="5" fill-opacity="0.05"/><rect x="60" y="0" width="5" height="5" fill-opacity="0.08"/><rect x="65" y="0" width="5" height="5" fill-opacity="0.13"/><rect x="70" y="0" width="5" height="5" fill-opacity="0.07"/><rect x="0" y="5" width="5" height="5" fill-opacity="0.70"/><rect x="5" y="5" width="5" height="5" fill-opacity="0.60"/><rect x="10" y="5" width="5" height="5" fill-opacity="0.62"/><rect x="15" y="5" width="5" height="5" fill-opacity="0.62"/><rect x="20" y="5" width="5" height="5" fill-opacity="0.64"/><rect x="25" y="5" width="5" height="5" fill-opacity="0.57"/><rect x="30" y="5" width="5" height="5" fill-opacity="0.38"/><rect x="35" y="5" width="5" height="5" fill-opacity="0.69"/><rect x="40" y="5" width="5" height="5" fill-opacity="0.67"/><rect x="45" y="5" width="5" height="5" fill-opacity="0.57"/><rect x="50" y="5" width="5" height="5" fill-opacity="0.59"/><rect x="55" y="5" width="5" height="5" fill-opacity="0.63"/><rect x="60" y="5" width="5" height="5" fill-opacity="0.41"/><rect x="65" y="5" width="5" height="5" fill-opacity="0.66"/><rect x="70" y="5" width="5" height="5" fill-opacity="0.48"/><rect x="0" y="10" width="5" height="5" fill-opacity="0.06"/><rect x="5" y="10" width="5" height="5" fill-opacity="0.11"/><rect x="10" y="10" width="5" height="5" fill-opacity="0.23"/><rect x="15" y="10" width="5" height="5" fill-opacity="0.09"/><rect x="20" y="10" width="5" height="5" fill-opacity="0.23"/><rect x="25" y="10" width="5" height="5" fill-opacity="0.29"/><rect x="30" y="10" width="5" height="5" fill-opacity="0.17"/><rect x="35" y="10" width="5" height="5" fill-opacity="0.14"/><rect x="40" y="10" width="5" height="5" fill-opacity="0.16"/><rect x="45" y="10" width="5" height="5" fill-opacity="0.22"/><rect x="50" y="10" width="5" height="5" fill-opacity="0.24"/><rect x="55" y="10" width="5" height="5" fill-opacity="0.20"/><rect x="60" y="10" width="5" height="5" fill-opacity="0.21"/><rect x="65" y="10" width="5" height="5" fill-opacity="0.06"/><rect x="70" y="10" width="5" height="5" fill-opacity="0.08"/></g></svg><div class="cell" style="left:877px;top:529px;color:#333">Ready</div><svg class="mz" style="left:978px;top:529px" width="155" height="15"><g fill="#888"><rect x="0" y="0" width="5" height="5" fill-opacity="0.13"/><rect x="5" y="0" width="5" height="5" fill-opacity="0.27"/><rect x="10" y="0" width="5" height="5" fill-opacity="0.14"/><rect x="15" y="0" width="5" height="5" fill-opacity="0.22"/><rect x="20" y="0" width="5" height="5" fill-opacity="0.05"/><rect x="25" y="0" width="5" height="5" fill-opacity="0.07"/><rect x="30" y="0" width="5" height="5" fill-opacity="0.13"/><rect x="35" y="0" width="5" height="5" fill-opacity="0.25"/><rect x="40" y="0" width="5" height="5" fill-opacity="0.26"/><rect x="45" y="0" width="5" height="5" fill-opacity="0.25"/><rect x="50" y="0" width="5" height="5" fill-opacity="0.14"/><rect x="55" y="0" width="5" height="5" fill-opacity="0.20"/><rect x="60" y="0" width="5" height="5" fill-opacity="0.19"/><rect x="65" y="0" width="5" height="5" fill-opacity="0.19"/><rect x="70" y="0" width="5" height="5" fill-opacity="0.09"/><rect x="75" y="0" width="5" height="5" fill-opacity="0.32"/><rect x="80" y="0" width="5" height="5" fill-opacity="0.11"/><rect x="85" y="0" width="5" height="5" fill-opacity="0.34"/><rect x="90" y="0" width="5" height="5" fill-opacity="0.33"/><rect x="95" y="0" width="5" height="5" fill-opacity="0.06"/><rect x="100" y="0" width="5" height="5" fill-opacity="0.19"/><rect x="105" y="0" width="5" height="5" fill-opacity="0.30"/><rect x="110" y="0" width="5" height="5" fill-opacity="0.34"/><rect x="115" y="0" width="5" height="5" fill-opacity="0.18"/><rect x="120" y="0" width="5" height="5" fill-opacity="0.13"/><rect x="125" y="0" width="5" height="5" fill-opacity="0.11"/><rect x="130" y="0" width="5" height="5" fill-opacity="0.33"/><rect x="135" y="0" width="5" height="5" fill-opacity="0.11"/><rect x="140" y="0" width="5" height="5" fill-opacity="0.22"/><rect x="145" y="0" width="5" height="5" fill-opacity="0.09"/><rect x="150" y="0" width="5" height="5" fill-opacity="0.21"/><rect x="0" y="5" width="5" height="5" fill-opacity="0.88"/><rect x="5" y="5" width="5" height="5" fill-opacity="0.51"/><rect x="10" y="5" width="5" height="5" fill-opacity="0.82"/><rect x="15" y="5" width="5" height="5" fill-opacity="0.68"/><rect x="20" y="5" width="5" height="5" fill-opacity="0.85"/><rect x="25" y="5" width="5" height="5" fill-opacity="0.77"/><rect x="30" y="5" width="5" height="5" fill-opacity="0.55"/><rect x="35" y="5" width="5" height="5" fill-opacity="0.85"/><rect x="40" y="5" width="5" height="5" fill-opacity="0.67"/><rect x="45" y="5" width="5" height="5" fill-opacity="0.46"/><rect x="50" y="5" width="5" height="5" fill-opacity="0.45"/><rect x="55" y="5" width="5" height="5" fill-opacity="0.67"/><rect x="60" y="5" width="5" height="5" fill-opacity="0.65"/><rect x="65" y="5" width="5" height="5" fill-opacity="0.59"/><rect x="70" y="5" width="5" height="5" fill-opacity="0.51"/><rect x="75" y="5" width="5" height="5" fill-opacity="0.60"/><rect x="80" y="5" width="5" height="5" fill-opacity="0.59"/><rect x="85" y="5" width="5" height="5" fill-opacity="0.83"/><rect x="90" y="5" width="5" height="5" fill-opacity="0.45"/><rect x="95" y="5" width="5" height="5" fill-opacity="0.79"/><rect x="100" y="5" width="5" height="5" fill-opacity="0.83"/><rect x="105" y="5" width="5" height="5" fill-opacity="0.50"/><rect x="110" y="5" width="5" height="5" fill-opacity="0.87"/><rect x="115" y="5" width="5" height="5" fill-opacity="0.77"/><rect x="120" y="5" width="5" height="5" fill-opacity="0.86"/><rect x="125" y="5" width="5" height="5" fill-opacity="0.58"/><rect x="130" y="5" width="5" height="5" fill-opacity="0.62"/><rect x="135" y="5" width="5" height="5" fill-opacity="0.63"/><rect x="140" y="5" width="5" height="5" fill-opacity="0.90"/><rect x="145" y="5" width="5" height="5" fill-opacity="0.72"/><rect x="150" y="5" width="5" height="5" fill-opacity="0.61"/><rect x="0" y="10" width="5" height="5" fill-opacity="0.18"/><rect x="5" y="10" width="5" height="5" fill-opacity="0.13"/><rect x="10" y="10" width="5" height="5" fill-opacity="0.06"/><rect x="15" y="10" width="5" height="5" fill-opacity="0.08"/><rect x="20" y="10" width="5" height="5" fill-opacity="0.30"/><rect x="25" y="10" width="5" height="5" fill-opacity="0.14"/><rect x="30" y="10" width="5" height="5" fill-opacity="0.33"/><rect x="35" y="10" width="5" height="5" fill-opacity="0.12"/><rect x="40" y="10" width="5" height="5" fill-opacity="0.13"/><rect x="45" y="10" width="5" height="5" fill-opacity="0.20"/><rect x="50" y="10" width="5" height="5" fill-opacity="0.11"/><rect x="55" y="10" width="5" height="5" fill-opacity="0.16"/><rect x="60" y="10" width="5" height="5" fill-opacity="0.34"/><rect x="65" y="10" width="5" height="5" fill-opacity="0.32"/><rect x="70" y="10" width="5" height="5" fill-opacity="0.29"/><rect x="75" y="10" width="5" height="5" fill-opacity="0.24"/><rect x="80" y="10" width="5" height="5" fill-opacity="0.32"/><rect x="85" y="10" width="5" height="5" fill-opacity="0.33"/><rect x="90" y="10" width="5" height="5" fill-opacity="0.21"/><rect x="95" y="10" width="5" height="5" fill-opacity="0.27"/><rect x="100" y="10" width="5" height="5" fill-opacity="0.06"/><rect x="105" y="10" width="5" height="5" fill-opacity="0.27"/><rect x="110" y="10" width="5" height="5" fill-opacity="0.19"/><rect x="115" y="10" width="5" height="5" fill-opacity="0.28"/><rect x="120" y="10" width="5" height="5" fill-opacity="0.24"/><rect x="125" y="10" width="5" height="5" fill-opacity="0.14"/><rect x="130" y="10" width="5" height="5" fill-opacity="0.06"/><rect x="135" y="10" width="5" height="5" fill-opacity="0.33"/><rect x="140" y="10" width="5" height="5" fill-opacity="0.09"/><rect x="145" y="10" width="5" height="5" fill-opacity="0.19"/><rect x="150" y="10" width="5" height="5" fill-opacity="0.15"/></g></svg><svg class="mz" style="left:1198px;top:529px" width="30" height="15"><g fill="#888"><rect x="0" y="0" width="5" height="5" fill-opacity="0.14"/><rect x="5" y="0" width="5" height="5" fill-opacity="0.27"/><rect x="10" y="0" width="5" height="5" fill-opacity="0.34"/><rect x="15" y="0" width="5" height="5" fill-opacity="0.13"/><rect x="20" y="0" width="5" height="5" fill-opacity="0.25"/><rect x="25" y="0" width="5" height="5" fill-opacity="0.14"/><rect x="0" y="5" width="5" height="5" fill-opacity="0.70"/><rect x="5" y="5" width="5" height="5" fill-opacity="0.63"/><rect x="10" y="5" width="5" height="5" fill-opacity="0.53"/><rect x="15" y="5" width="5" height="5" fill-opacity="0.52"/><rect x="20" y="5" width="5" height="5" fill-opacity="0.54"/><rect x="25" y="5" width="5" height="5" fill-opacity="0.86"/><rect x="0" y="10" width="5" height="5" fill-opacity="0.20"/><rect x="5" y="10" width="5" height="5" fill-opacity="0.12"/><rect x="10" y="10" width="5" height="5" fill-opacity="0.32"/><rect x="15" y="10" width="5" height="5" fill-opacity="0.35"/><rect x="20" y="10" width="5" height="5" fill-opacity="0.18"/><rect x="25" y="10" width="5" height="5" fill-opacity="0.09"/></g></svg><div class="abs" style="left:30px;top:554px;width:1611px;height:36px;background:#ffffff"></div><div class="cell" style="left:38px;top:565px;color:#333">3</div><div class="abs" style="left:77px;top:566px;width:14px;height:14px;background:#fff;border:1px solid #dcdcdc;border-radius:2px"></div><div class="cell" style="left:117px;top:565px;color:#2f8fd9">TX4L</div><svg class="mz" style="left:144px;top:567px" width="100" height="10"><g fill="#5aa8dc"><rect x="0" y="0" width="5" height="5" fill-opacity="0.20"/><rect x="5" y="0" width="5" height="5" fill-opacity="0.15"/><rect x="10" y="0" width="5" height="5" fill-opacity="0.27"/><rect x="15" y="0" width="5" height="5" fill-opacity="0.15"/><rect x="20" y="0" width="5" height="5" fill-opacity="0.22"/><rect x="25" y="0" width="5" height="5" fill-opacity="0.23"/><rect x="30" y="0" width="5" height="5" fill-opacity="0.38"/><rect x="35" y="0" width="5" height="5" fill-opacity="0.54"/><rect x="40" y="0" width="5" height="5" fill-opacity="0.47"/><rect x="45" y="0" width="5" height="5" fill-opacity="0.31"/><rect x="50" y="0" width="5" height="5" fill-opacity="0.31"/><rect x="55" y="0" width="5" height="5" fill-opacity="0.36"/><rect x="60" y="0" width="5" height="5" fill-opacity="0.29"/><rect x="65" y="0" width="5" height="5" fill-opacity="0.27"/><rect x="70" y="0" width="5" height="5" fill-opacity="0.13"/><rect x="75" y="0" width="5" height="5" fill-opacity="0.24"/><rect x="80" y="0" width="5" height="5" fill-opacity="0.58"/><rect x="85" y="0" width="5" height="5" fill-opacity="0.16"/><rect x="90" y="0" width="5" height="5" fill-opacity="0.35"/><rect x="95" y="0" width="5" height="5" fill-opacity="0.41"/><rect x="0" y="5" width="5" height="5" fill-opacity="0.53"/><rect x="5" y="5" width="5" height="5" fill-opacity="0.21"/><rect x="10" y="5" width="5" height="5" fill-opacity="0.24"/><rect x="15" y="5" width="5" height="5" fill-opacity="0.22"/><rect x="20" y="5" width="5" height="5" fill-opacity="0.30"/><rect x="25" y="5" width="5" height="5" fill-opacity="0.32"/><rect x="30" y="5" width="5" height="5" fill-opacity="0.58"/><rect x="35" y="5" width="5" height="5" fill-opacity="0.52"/><rect x="40" y="5" width="5" height="5" fill-opacity="0.54"/><rect x="45" y="5" width="5" height="5" fill-opacity="0.11"/><rect x="50" y="5" width="5" height="5" fill-opacity="0.12"/><rect x="55" y="5" width="5" height="5" fill-opacity="0.45"/><rect x="60" y="5" width="5" height="5" fill-opacity="0.55"/><rect x="65" y="5" width="5" height="5" fill-opacity="0.34"/><rect x="70" y="5" width="5" height="5" fill-opacity="0.39"/><rect x="75" y="5" width="5" height="5" fill-opacity="0.10"/><rect x="80" y="5" width="5" height="5" fill-opacity="0.30"/><rect x="85" y="5" width="5" height="5" fill-opacity="0.56"/><rect x="90" y="5" width="5" height="5" fill-opacity="0.51"/><rect x="95" y="5" width="5" height="5" fill-opacity="0.53"/></g></svg><div class="cell" style="left:297px;top:565px;color:#333">TX4L</div><svg class="mz" style="left:322px;top:567px" width="65" height="10"><g fill="#888"><rect x="0" y="0" width="5" height="5" fill-opacity="0.59"/><rect x="5" y="0" width="5" height="5" fill-opacity="0.22"/><rect x="10" y="0" width="5" height="5" fill-opacity="0.15"/><rect x="15" y="0" width="5" height="5" fill-opacity="0.18"/><rect x="20" y="0" width="5" height="5" fill-opacity="0.36"/><rect x="25" y="0" width="5" height="5" fill-opacity="0.44"/><rect x="30" y="0" width="5" height="5" fill-opacity="0.57"/><rect x="35" y="0" width="5" height="5" fill-opacity="0.46"/><rect x="40" y="0" width="5" height="5" fill-opacity="0.42"/><rect x="45" y="0" width="5" height="5" fill-opacity="0.48"/><rect x="50" y="0" width="5" height="5" fill-opacity="0.33"/><rect x="55" y="0" width="5" height="5" fill-opacity="0.38"/><rect x="60" y="0" width="5" height="5" fill-opacity="0.12"/><rect x="0" y="5" width="5" height="5" fill-opacity="0.49"/><rect x="5" y="5" width="5" height="5" fill-opacity="0.22"/><rect x="10" y="5" width="5" height="5" fill-opacity="0.56"/><rect x="15" y="5" width="5" height="5" fill-opacity="0.42"/><rect x="20" y="5" width="5" height="5" fill-opacity="0.25"/><rect x="25" y="5" width="5" height="5" fill-opacity="0.16"/><rect x="30" y="5" width="5" height="5" fill-opacity="0.23"/><rect x="35" y="5" width="5" height="5" fill-opacity="0.42"/><rect x="40" y="5" width="5" height="5" fill-opacity="0.45"/><rect x="45" y="5" width="5" height="5" fill-opacity="0.16"/><rect x="50" y="5" width="5" height="5" fill-opacity="0.14"/><rect x="55" y="5" width="5" height="5" fill-opacity="0.36"/><rect x="60" y="5" width="5" height="5" fill-opacity="0.39"/></g></svg><svg class="mz" style="left:474px;top:565px" width="60" height="15"><g fill="#888"><rect x="0" y="0" width="5" height="5" fill-opacity="0.12"/><rect x="5" y="0" width="5" height="5" fill-opacity="0.08"/><rect x="10" y="0" width="5" height="5" fill-opacity="0.16"/><rect x="15" y="0" width="5" height="5" fill-opacity="0.04"/><rect x="20" y="0" width="5" height="5" fill-opacity="0.10"/><rect x="25" y="0" width="5" height="5" fill-opacity="0.13"/><rect x="30" y="0" width="5" height="5" fill-opacity="0.24"/><rect x="35" y="0" width="5" height="5" fill-opacity="0.17"/><rect x="40" y="0" width="5" height="5" fill-opacity="0.22"/><rect x="45" y="0" width="5" height="5" fill-opacity="0.13"/><rect x="50" y="0" width="5" height="5" fill-opacity="0.08"/><rect x="55" y="0" width="5" height="5" fill-opacity="0.09"/><rect x="0" y="5" width="5" height="5" fill-opacity="0.62"/><rect x="5" y="5" width="5" height="5" fill-opacity="0.54"/><rect x="10" y="5" width="5" height="5" fill-opacity="0.41"/><rect x="15" y="5" width="5" height="5" fill-opacity="0.32"/><rect x="20" y="5" width="5" height="5" fill-opacity="0.47"/><rect x="25" y="5" width="5" height="5" fill-opacity="0.53"/><rect x="30" y="5" width="5" height="5" fill-opacity="0.45"/><rect x="35" y="5" width="5" height="5" fill-opacity="0.40"/><rect x="40" y="5" width="5" height="5" fill-opacity="0.53"/><rect x="45" y="5" width="5" height="5" fill-opacity="0.61"/><rect x="50" y="5" width="5" height="5" fill-opacity="0.39"/><rect x="55" y="5" width="5" height="5" fill-opacity="0.33"/><rect x="0" y="10" width="5" height="5" fill-opacity="0.11"/><rect x="5" y="10" width="5" height="5" fill-opacity="0.12"/><rect x="10" y="10" width="5" height="5" fill-opacity="0.18"/><rect x="15" y="10" width="5" height="5" fill-opacity="0.08"/><rect x="20" y="10" width="5" height="5" fill-opacity="0.20"/><rect x="25" y="10" width="5" height="5" fill-opacity="0.19"/><rect x="30" y="10" width="5" height="5" fill-opacity="0.14"/><rect x="35" y="10" width="5" height="5" fill-opacity="0.08"/><rect x="40" y="10" width="5" height="5" fill-opacity="0.24"/><rect x="45" y="10" width="5" height="5" fill-opacity="0.10"/><rect x="50" y="10" width="5" height="5" fill-opacity="0.21"/><rect x="55" y="10" width="5" height="5" fill-opacity="0.08"/></g></svg><svg class="mz" style="left:626px;top:565px" width="60" height="15"><g fill="#888"><rect x="0" y="0" width="5" height="5" fill-opacity="0.08"/><rect x="5" y="0" width="5" height="5" fill-opacity="0.19"/><rect x="10" y="0" width="5" height="5" fill-opacity="0.10"/><rect x="15" y="0" width="5" height="5" fill-opacity="0.23"/><rect x="20" y="0" width="5" height="5" fill-opacity="0.14"/><rect x="25" y="0" width="5" height="5" fill-opacity="0.07"/><rect x="30" y="0" width="5" height="5" fill-opacity="0.08"/><rect x="35" y="0" width="5" height="5" fill-opacity="0.12"/><rect x="40" y="0" width="5" height="5" fill-opacity="0.17"/><rect x="45" y="0" width="5" height="5" fill-opacity="0.23"/><rect x="50" y="0" width="5" height="5" fill-opacity="0.07"/><rect x="55" y="0" width="5" height="5" fill-opacity="0.12"/><rect x="0" y="5" width="5" height="5" fill-opacity="0.38"/><rect x="5" y="5" width="5" height="5" fill-opacity="0.62"/><rect x="10" y="5" width="5" height="5" fill-opacity="0.36"/><rect x="15" y="5" width="5" height="5" fill-opacity="0.33"/><rect x="20" y="5" width="5" height="5" fill-opacity="0.33"/><rect x="25" y="5" width="5" height="5" fill-opacity="0.44"/><rect x="30" y="5" width="5" height="5" fill-opacity="0.60"/><rect x="35" y="5" width="5" height="5" fill-opacity="0.59"/><rect x="40" y="5" width="5" height="5" fill-opacity="0.55"/><rect x="45" y="5" width="5" height="5" fill-opacity="0.63"/><rect x="50" y="5" width="5" height="5" fill-opacity="0.61"/><rect x="55" y="5" width="5" height="5" fill-opacity="0.42"/><rect x="0" y="10" width="5" height="5" fill-opacity="0.07"/><rect x="5" y="10" width="5" height="5" fill-opacity="0.23"/><rect x="10" y="10" width="5" height="5" fill-opacity="0.19"/><rect x="15" y="10" width="5" height="5" fill-opacity="0.04"/><rect x="20" y="10" width="5" height="5" fill-opacity="0.17"/><rect x="25" y="10" width="5" height="5" fill-opacity="0.11"/><rect x="30" y="10" width="5" height="5" fill-opacity="0.11"/><rect x="35" y="10" width="5" height="5" fill-opacity="0.10"/><rect x="40" y="10" width="5" height="5" fill-opacity="0.07"/><rect x="45" y="10" width="5" height="5" fill-opacity="0.04"/><rect x="50" y="10" width="5" height="5" fill-opacity="0.09"/><rect x="55" y="10" width="5" height="5" fill-opacity="0.11"/></g></svg><svg class="mz" style="left:777px;top:565px" width="75" height="15"><g fill="#888"><rect x="0" y="0" width="5" height="5" fill-opacity="0.29"/><rect x="5" y="0" width="5" height="5" fill-opacity="0.07"/><rect x="10" y="0" width="5" height="5" fill-opacity="0.29"/><rect x="15" y="0" width="5" height="5" fill-opacity="0.10"/><rect x="20" y="0" width="5" height="5" fill-opacity="0.13"/><rect x="25" y="0" width="5" height="5" fill-opacity="0.25"/><rect x="30" y="0" width="5" height="5" fill-opacity="0.25"/><rect x="35" y="0" width="5" height="5" fill-opacity="0.15"/><rect x="40" y="0" width="5" height="5" fill-opacity="0.06"/><rect x="45" y="0" width="5" height="5" fill-opacity="0.16"/><rect x="50" y="0" width="5" height="5" fill-opacity="0.14"/><rect x="55" y="0" width="5" height="5" fill-opacity="0.28"/><rect x="60" y="0" width="5" height="5" fill-opacity="0.09"/><rect x="65" y="0" width="5" height="5" fill-opacity="0.14"/><rect x="70" y="0" width="5" height="5" fill-opacity="0.27"/><rect x="0" y="5" width="5" height="5" fill-opacity="0.39"/><rect x="5" y="5" width="5" height="5" fill-opacity="0.54"/><rect x="10" y="5" width="5" height="5" fill-opacity="0.69"/><rect x="15" y="5" width="5" height="5" fill-opacity="0.68"/><rect x="20" y="5" width="5" height="5" fill-opacity="0.40"/><rect x="25" y="5" width="5" height="5" fill-opacity="0.40"/><rect x="30" y="5" width="5" height="5" fill-opacity="0.41"/><rect x="35" y="5" width="5" height="5" fill-opacity="0.73"/><rect x="40" y="5" width="5" height="5" fill-opacity="0.48"/><rect x="45" y="5" width="5" height="5" fill-opacity="0.67"/><rect x="50" y="5" width="5" height="5" fill-opacity="0.73"/><rect x="55" y="5" width="5" height="5" fill-opacity="0.51"/><rect x="60" y="5" width="5" height="5" fill-opacity="0.49"/><rect x="65" y="5" width="5" height="5" fill-opacity="0.75"/><rect x="70" y="5" width="5" height="5" fill-opacity="0.62"/><rect x="0" y="10" width="5" height="5" fill-opacity="0.11"/><rect x="5" y="10" width="5" height="5" fill-opacity="0.23"/><rect x="10" y="10" width="5" height="5" fill-opacity="0.12"/><rect x="15" y="10" width="5" height="5" fill-opacity="0.11"/><rect x="20" y="10" width="5" height="5" fill-opacity="0.04"/><rect x="25" y="10" width="5" height="5" fill-opacity="0.24"/><rect x="30" y="10" width="5" height="5" fill-opacity="0.28"/><rect x="35" y="10" width="5" height="5" fill-opacity="0.20"/><rect x="40" y="10" width="5" height="5" fill-opacity="0.28"/><rect x="45" y="10" width="5" height="5" fill-opacity="0.05"/><rect x="50" y="10" width="5" height="5" fill-opacity="0.10"/><rect x="55" y="10" width="5" height="5" fill-opacity="0.16"/><rect x="60" y="10" width="5" height="5" fill-opacity="0.29"/><rect x="65" y="10" width="5" height="5" fill-opacity="0.29"/><rect x="70" y="10" width="5" height="5" fill-opacity="0.14"/></g></svg><div class="cell" style="left:877px;top:565px;color:#333">Ready</div><svg class="mz" style="left:978px;top:565px" width="155" height="15"><g fill="#888"><rect x="0" y="0" width="5" height="5" fill-opacity="0.13"/><rect x="5" y="0" width="5" height="5" fill-opacity="0.18"/><rect x="10" y="0" width="5" height="5" fill-opacity="0.20"/><rect x="15" y="0" width="5" height="5" fill-opacity="0.33"/><rect x="20" y="0" width="5" height="5" fill-opacity="0.10"/><rect x="25" y="0" width="5" height="5" fill-opacity="0.29"/><rect x="30" y="0" width="5" height="5" fill-opacity="0.27"/><rect x="35" y="0" width="5" height="5" fill-opacity="0.30"/><rect x="40" y="0" width="5" height="5" fill-opacity="0.28"/><rect x="45" y="0" width="5" height="5" fill-opacity="0.23"/><rect x="50" y="0" width="5" height="5" fill-opacity="0.15"/><rect x="55" y="0" width="5" height="5" fill-opacity="0.15"/><rect x="60" y="0" width="5" height="5" fill-opacity="0.16"/><rect x="65" y="0" width="5" height="5" fill-opacity="0.28"/><rect x="70" y="0" width="5" height="5" fill-opacity="0.07"/><rect x="75" y="0" width="5" height="5" fill-opacity="0.11"/><rect x="80" y="0" width="5" height="5" fill-opacity="0.28"/><rect x="85" y="0" width="5" height="5" fill-opacity="0.12"/><rect x="90" y="0" width="5" height="5" fill-opacity="0.07"/><rect x="95" y="0" width="5" height="5" fill-opacity="0.06"/><rect x="100" y="0" width="5" height="5" fill-opacity="0.22"/><rect x="105" y="0" width="5" height="5" fill-opacity="0.15"/><rect x="110" y="0" width="5" height="5" fill-opacity="0.34"/><rect x="115" y="0" width="5" height="5" fill-opacity="0.32"/><rect x="120" y="0" width="5" height="5" fill-opacity="0.35"/><rect x="125" y="0" width="5" height="5" fill-opacity="0.13"/><rect x="130" y="0" width="5" height="5" fill-opacity="0.08"/><rect x="135" y="0" width="5" height="5" fill-opacity="0.08"/><rect x="140" y="0" width="5" height="5" fill-opacity="0.20"/><rect x="145" y="0" width="5" height="5" fill-opacity="0.26"/><rect x="150" y="0" width="5" height="5" fill-opacity="0.18"/><rect x="0" y="5" width="5" height="5" fill-opacity="0.56"/><rect x="5" y="5" width="5" height="5" fill-opacity="0.64"/><rect x="10" y="5" width="5" height="5" fill-opacity="0.73"/><rect x="15" y="5" width="5" height="5" fill-opacity="0.75"/><rect x="20" y="5" width="5" height="5" fill-opacity="0.79"/><rect x="25" y="5" width="5" height="5" fill-opacity="0.83"/><rect x="30" y="5" width="5" height="5" fill-opacity="0.75"/><rect x="35" y="5" width="5" height="5" fill-opacity="0.50"/><rect x="40" y="5" width="5" height="5" fill-opacity="0.83"/><rect x="45" y="5" width="5" height="5" fill-opacity="0.58"/><rect x="50" y="5" width="5" height="5" fill-opacity="0.71"/><rect x="55" y="5" width="5" height="5" fill-opacity="0.62"/><rect x="60" y="5" width="5" height="5" fill-opacity="0.78"/><rect x="65" y="5" width="5" height="5" fill-opacity="0.54"/><rect x="70" y="5" width="5" height="5" fill-opacity="0.56"/><rect x="75" y="5" width="5" height="5" fill-opacity="0.56"/><rect x="80" y="5" width="5" height="5" fill-opacity="0.52"/><rect x="85" y="5" width="5" height="5" fill-opacity="0.85"/><rect x="90" y="5" width="5" height="5" fill-opacity="0.71"/><rect x="95" y="5" width="5" height="5" fill-opacity="0.60"/><rect x="100" y="5" width="5" height="5" fill-opacity="0.63"/><rect x="105" y="5" width="5" height="5" fill-opacity="0.90"/><rect x="110" y="5" width="5" height="5" fill-opacity="0.68"/><rect x="115" y="5" width="5" height="5" fill-opacity="0.55"/><rect x="120" y="5" width="5" height="5" fill-opacity="0.81"/><rect x="125" y="5" width="5" height="5" fill-opacity="0.74"/><rect x="130" y="5" width="5" height="5" fill-opacity="0.90"/><rect x="135" y="5" width="5" height="5" fill-opacity="0.50"/><rect x="140" y="5" width="5" height="5" fill-opacity="0.66"/><rect x="145" y="5" width="5" height="5" fill-opacity="0.82"/><rect x="150" y="5" width="5" height="5" fill-opacity="0.83"/><rect x="0" y="10" width="5" height="5" fill-opacity="0.32"/><rect x="5" y="10" width="5" height="5" fill-opacity="0.06"/><rect x="10" y="10" width="5" height="5" fill-opacity="0.14"/><rect x="15" y="10" width="5" height="5" fill-opacity="0.09"/><rect x="20" y="10" width="5" height="5" fill-opacity="0.11"/><rect x="25" y="10" width="5" height="5" fill-opacity="0.34"/><rect x="30" y="10" width="5" height="5" fill-opacity="0.22"/><rect x="35" y="10" width="5" height="5" fill-opacity="0.33"/><rect x="40" y="10" width="5" height="5" fill-opacity="0.16"/><rect x="45" y="10" width="5" height="5" fill-opacity="0.31"/><rect x="50" y="10" width="5" height="5" fill-opacity="0.18"/><rect x="55" y="10" width="5" height="5" fill-opacity="0.13"/><rect x="60" y="10" width="5" height="5" fill-opacity="0.28"/><rect x="65" y="10" width="5" height="5" fill-opacity="0.33"/><rect x="70" y="10" width="5" height="5" fill-opacity="0.08"/><rect x="75" y="10" width="5" height="5" fill-opacity="0.23"/><rect x="80" y="10" width="5" height="5" fill-opacity="0.24"/><rect x="85" y="10" width="5" height="5" fill-opacity="0.12"/><rect x="90" y="10" width="5" height="5" fill-opacity="0.16"/><rect x="95" y="10" width="5" height="5" fill-opacity="0.09"/><rect x="100" y="10" width="5" height="5" fill-opacity="0.11"/><rect x="105" y="10" width="5" height="5" fill-opacity="0.13"/><rect x="110" y="10" width="5" height="5" fill-opacity="0.23"/><rect x="115" y="10" width="5" height="5" fill-opacity="0.25"/><rect x="120" y="10" width="5" height="5" fill-opacity="0.11"/><rect x="125" y="10" width="5" height="5" fill-opacity="0.05"/><rect x="130" y="10" width="5" height="5" fill-opacity="0.15"/><rect x="135" y="10" width="5" height="5" fill-opacity="0.25"/><rect x="140" y="10" width="5" height="5" fill-opacity="0.11"/><rect x="145" y="10" width="5" height="5" fill-opacity="0.14"/><rect x="150" y="10" width="5" height="5" fill-opacity="0.11"/></g></svg><svg class="mz" style="left:1198px;top:565px" width="30" height="15"><g fill="#888"><rect x="0" y="0" width="5" height="5" fill-opacity="0.29"/><rect x="5" y="0" width="5" height="5" fill-opacity="0.21"/><rect x="10" y="0" width="5" height="5" fill-opacity="0.07"/><rect x="15" y="0" width="5" height="5" fill-opacity="0.08"/><rect x="20" y="0" width="5" height="5" fill-opacity="0.17"/><rect x="25" y="0" width="5" height="5" fill-opacity="0.22"/><rect x="0" y="5" width="5" height="5" fill-opacity="0.74"/><rect x="5" y="5" width="5" height="5" fill-opacity="0.49"/><rect x="10" y="5" width="5" height="5" fill-opacity="0.52"/><rect x="15" y="5" width="5" height="5" fill-opacity="0.76"/><rect x="20" y="5" width="5" height="5" fill-opacity="0.63"/><rect x="25" y="5" width="5" height="5" fill-opacity="0.58"/><rect x="0" y="10" width="5" height="5" fill-opacity="0.14"/><rect x="5" y="10" width="5" height="5" fill-opacity="0.34"/><rect x="10" y="10" width="5" height="5" fill-opacity="0.14"/><rect x="15" y="10" width="5" height="5" fill-opacity="0.22"/><rect x="20" y="10" width="5" height="5" fill-opacity="0.16"/><rect x="25" y="10" width="5" height="5" fill-opacity="0.17"/></g></svg><div class="abs" style="left:30px;top:590px;width:1611px;height:36px;background:#f3f3f3"></div><div class="cell" style="left:38px;top:601px;color:#333">4</div><div class="abs" style="left:77px;top:602px;width:14px;height:14px;background:#fff;border:1px solid #dcdcdc;border-radius:2px"></div><div class="cell" style="left:117px;top:601px;color:#2f8fd9">TX4L</div><svg class="mz" style="left:144px;top:603px" width="100" height="10"><g fill="#5aa8dc"><rect x="0" y="0" width="5" height="5" fill-opacity="0.53"/><rect x="5" y="0" width="5" height="5" fill-opacity="0.60"/><rect x="10" y="0" width="5" height="5" fill-opacity="0.28"/><rect x="15" y="0" width="5" height="5" fill-opacity="0.20"/><rect x="20" y="0" width="5" height="5" fill-opacity="0.46"/><rect x="25" y="0" width="5" height="5" fill-opacity="0.20"/><rect x="30" y="0" width="5" height="5" fill-opacity="0.10"/><rect x="35" y="0" width="5" height="5" fill-opacity="0.55"/><rect x="40" y="0" width="5" height="5" fill-opacity="0.31"/><rect x="45" y="0" width="5" height="5" fill-opacity="0.51"/><rect x="50" y="0" width="5" height="5" fill-opacity="0.30"/><rect x="55" y="0" width="5" height="5" fill-opacity="0.54"/><rect x="60" y="0" width="5" height="5" fill-opacity="0.33"/><rect x="65" y="0" width="5" height="5" fill-opacity="0.18"/><rect x="70" y="0" width="5" height="5" fill-opacity="0.11"/><rect x="75" y="0" width="5" height="5" fill-opacity="0.38"/><rect x="80" y="0" width="5" height="5" fill-opacity="0.42"/><rect x="85" y="0" width="5" height="5" fill-opacity="0.55"/><rect x="90" y="0" width="5" height="5" fill-opacity="0.14"/><rect x="95" y="0" width="5" height="5" fill-opacity="0.41"/><rect x="0" y="5" width="5" height="5" fill-opacity="0.29"/><rect x="5" y="5" width="5" height="5" fill-opacity="0.35"/><rect x="10" y="5" width="5" height="5" fill-opacity="0.17"/><rect x="15" y="5" width="5" height="5" fill-opacity="0.24"/><rect x="20" y="5" width="5" height="5" fill-opacity="0.36"/><rect x="25" y="5" width="5" height="5" fill-opacity="0.56"/><rect x="30" y="5" width="5" height="5" fill-opacity="0.15"/><rect x="35" y="5" width="5" height="5" fill-opacity="0.35"/><rect x="40" y="5" width="5" height="5" fill-opacity="0.50"/><rect x="45" y="5" width="5" height="5" fill-opacity="0.58"/><rect x="50" y="5" width="5" height="5" fill-opacity="0.20"/><rect x="55" y="5" width="5" height="5" fill-opacity="0.16"/><rect x="60" y="5" width="5" height="5" fill-opacity="0.57"/><rect x="65" y="5" width="5" height="5" fill-opacity="0.59"/><rect x="70" y="5" width="5" height="5" fill-opacity="0.34"/><rect x="75" y="5" width="5" height="5" fill-opacity="0.13"/><rect x="80" y="5" width="5" height="5" fill-opacity="0.56"/><rect x="85" y="5" width="5" height="5" fill-opacity="0.29"/><rect x="90" y="5" width="5" height="5" fill-opacity="0.55"/><rect x="95" y="5" width="5" height="5" fill-opacity="0.41"/></g></svg><div class="cell" style="left:297px;top:601px;color:#333">TX4L</div><svg class="mz" style="left:322px;top:603px" width="65" height="10"><g fill="#888"><rect x="0" y="0" width="5" height="5" fill-opacity="0.51"/><rect x="5" y="0" width="5" height="5" fill-opacity="0.18"/><rect x="10" y="0" width="5" height="5" fill-opacity="0.49"/><rect x="15" y="0" width="5" height="5" fill-opacity="0.21"/><rect x="20" y="0" width="5" height="5" fill-opacity="0.30"/><rect x="25" y="0" width="5" height="5" fill-opacity="0.52"/><rect x="30" y="0" width="5" height="5" fill-opacity="0.51"/><rect x="35" y="0" width="5" height="5" fill-opacity="0.19"/><rect x="40" y="0" width="5" height="5" fill-opacity="0.21"/><rect x="45" y="0" width="5" height="5" fill-opacity="0.30"/><rect x="50" y="0" width="5" height="5" fill-opacity="0.36"/><rect x="55" y="0" width="5" height="5" fill-opacity="0.29"/><rect x="60" y="0" width="5" height="5" fill-opacity="0.16"/><rect x="0" y="5" width="5" height="5" fill-opacity="0.22"/><rect x="5" y="5" width="5" height="5" fill-opacity="0.46"/><rect x="10" y="5" width="5" height="5" fill-opacity="0.55"/><rect x="15" y="5" width="5" height="5" fill-opacity="0.12"/><rect x="20" y="5" width="5" height="5" fill-opacity="0.38"/><rect x="25" y="5" width="5" height="5" fill-opacity="0.48"/><rect x="30" y="5" width="5" height="5" fill-opacity="0.12"/><rect x="35" y="5" width="5" height="5" fill-opacity="0.52"/><rect x="40" y="5" width="5" height="5" fill-opacity="0.16"/><rect x="45" y="5" width="5" height="5" fill-opacity="0.40"/><rect x="50" y="5" width="5" height="5" fill-opacity="0.38"/><rect x="55" y="5" width="5" height="5" fill-opacity="0.41"/><rect x="60" y="5" width="5" height="5" fill-opacity="0.25"/></g></svg><svg class="mz" style="left:474px;top:601px" width="60" height="15"><g fill="#888"><rect x="0" y="0" width="5" height="5" fill-opacity="0.12"/><rect x="5" y="0" width="5" height="5" fill-opacity="0.16"/><rect x="10" y="0" width="5" height="5" fill-opacity="0.12"/><rect x="15" y="0" width="5" height="5" fill-opacity="0.17"/><rect x="20" y="0" width="5" height="5" fill-opacity="0.13"/><rect x="25" y="0" width="5" height="5" fill-opacity="0.13"/><rect x="30" y="0" width="5" height="5" fill-opacity="0.04"/><rect x="35" y="0" width="5" height="5" fill-opacity="0.16"/><rect x="40" y="0" width="5" height="5" fill-opacity="0.14"/><rect x="45" y="0" width="5" height="5" fill-opacity="0.08"/><rect x="50" y="0" width="5" height="5" fill-opacity="0.20"/><rect x="55" y="0" width="5" height="5" fill-opacity="0.20"/><rect x="0" y="5" width="5" height="5" fill-opacity="0.46"/><rect x="5" y="5" width="5" height="5" fill-opacity="0.37"/><rect x="10" y="5" width="5" height="5" fill-opacity="0.46"/><rect x="15" y="5" width="5" height="5" fill-opacity="0.35"/><rect x="20" y="5" width="5" height="5" fill-opacity="0.36"/><rect x="25" y="5" width="5" height="5" fill-opacity="0.45"/><rect x="30" y="5" width="5" height="5" fill-opacity="0.34"/><rect x="35" y="5" width="5" height="5" fill-opacity="0.45"/><rect x="40" y="5" width="5" height="5" fill-opacity="0.48"/><rect x="45" y="5" width="5" height="5" fill-opacity="0.33"/><rect x="50" y="5" width="5" height="5" fill-opacity="0.52"/><rect x="55" y="5" width="5" height="5" fill-opacity="0.34"/><rect x="0" y="10" width="5" height="5" fill-opacity="0.19"/><rect x="5" y="10" width="5" height="5" fill-opacity="0.20"/><rect x="10" y="10" width="5" height="5" fill-opacity="0.14"/><rect x="15" y="10" width="5" height="5" fill-opacity="0.05"/><rect x="20" y="10" width="5" height="5" fill-opacity="0.14"/><rect x="25" y="10" width="5" height="5" fill-opacity="0.11"/><rect x="30" y="10" width="5" height="5" fill-opacity="0.23"/><rect x="35" y="10" width="5" height="5" fill-opacity="0.06"/><rect x="40" y="10" width="5" height="5" fill-opacity="0.21"/><rect x="45" y="10" width="5" height="5" fill-opacity="0.24"/><rect x="50" y="10" width="5" height="5" fill-opacity="0.19"/><rect x="55" y="10" width="5" height="5" fill-opacity="0.21"/></g></svg><svg class="mz" style="left:626px;top:601px" width="60" height="15"><g fill="#888"><rect x="0" y="0" width="5" height="5" fill-opacity="0.08"/><rect x="5" y="0" width="5" height="5" fill-opacity="0.24"/><rect x="10" y="0" width="5" height="5" fill-opacity="0.14"/><rect x="15" y="0" width="5" height="5" fill-opacity="0.24"/><rect x="20" y="0" width="5" height="5" fill-opacity="0.23"/><rect x="25" y="0" width="5" height="5" fill-opacity="0.07"/><rect x="30" y="0" width="5" height="5" fill-opacity="0.20"/><rect x="35" y="0" width="5" height="5" fill-opacity="0.23"/><rect x="40" y="0" width="5" height="5" fill-opacity="0.05"/><rect x="45" y="0" width="5" height="5" fill-opacity="0.11"/><rect x="50" y="0" width="5" height="5" fill-opacity="0.19"/><rect x="55" y="0" width="5" height="5" fill-opacity="0.07"/><rect x="0" y="5" width="5" height="5" fill-opacity="0.60"/><rect x="5" y="5" width="5" height="5" fill-opacity="0.40"/><rect x="10" y="5" width="5" height="5" fill-opacity="0.57"/><rect x="15" y="5" width="5" height="5" fill-opacity="0.36"/><rect x="20" y="5" width="5" height="5" fill-opacity="0.47"/><rect x="25" y="5" width="5" height="5" fill-opacity="0.60"/><rect x="30" y="5" width="5" height="5" fill-opacity="0.38"/><rect x="35" y="5" width="5" height="5" fill-opacity="0.40"/><rect x="40" y="5" width="5" height="5" fill-opacity="0.47"/><rect x="45" y="5" width="5" height="5" fill-opacity="0.42"/><rect x="50" y="5" width="5" height="5" fill-opacity="0.33"/><rect x="55" y="5" width="5" height="5" fill-opacity="0.37"/><rect x="0" y="10" width="5" height="5" fill-opacity="0.07"/><rect x="5" y="10" width="5" height="5" fill-opacity="0.23"/><rect x="10" y="10" width="5" height="5" fill-opacity="0.18"/><rect x="15" y="10" width="5" height="5" fill-opacity="0.22"/><rect x="20" y="10" width="5" height="5" fill-opacity="0.07"/><rect x="25" y="10" width="5" height="5" fill-opacity="0.20"/><rect x="30" y="10" width="5" height="5" fill-opacity="0.06"/><rect x="35" y="10" width="5" height="5" fill-opacity="0.15"/><rect x="40" y="10" width="5" height="5" fill-opacity="0.17"/><rect x="45" y="10" width="5" height="5" fill-opacity="0.11"/><rect x="50" y="10" width="5" height="5" fill-opacity="0.22"/><rect x="55" y="10" width="5" height="5" fill-opacity="0.15"/></g></svg><svg class="mz" style="left:777px;top:601px" width="75" height="15"><g fill="#888"><rect x="0" y="0" width="5" height="5" fill-opacity="0.19"/><rect x="5" y="0" width="5" height="5" fill-opacity="0.27"/><rect x="10" y="0" width="5" height="5" fill-opacity="0.07"/><rect x="15" y="0" width="5" height="5" fill-opacity="0.30"/><rect x="20" y="0" width="5" height="5" fill-opacity="0.20"/><rect x="25" y="0" width="5" height="5" fill-opacity="0.14"/><rect x="30" y="0" width="5" height="5" fill-opacity="0.25"/><rect x="35" y="0" width="5" height="5" fill-opacity="0.11"/><rect x="40" y="0" width="5" height="5" fill-opacity="0.30"/><rect x="45" y="0" width="5" height="5" fill-opacity="0.19"/><rect x="50" y="0" width="5" height="5" fill-opacity="0.13"/><rect x="55" y="0" width="5" height="5" fill-opacity="0.24"/><rect x="60" y="0" width="5" height="5" fill-opacity="0.16"/><rect x="65" y="0" width="5" height="5" fill-opacity="0.09"/><rect x="70" y="0" width="5" height="5" fill-opacity="0.23"/><rect x="0" y="5" width="5" height="5" fill-opacity="0.40"/><rect x="5" y="5" width="5" height="5" fill-opacity="0.70"/><rect x="10" y="5" width="5" height="5" fill-opacity="0.48"/><rect x="15" y="5" width="5" height="5" fill-opacity="0.63"/><rect x="20" y="5" width="5" height="5" fill-opacity="0.76"/><rect x="25" y="5" width="5" height="5" fill-opacity="0.61"/><rect x="30" y="5" width="5" height="5" fill-opacity="0.64"/><rect x="35" y="5" width="5" height="5" fill-opacity="0.50"/><rect x="40" y="5" width="5" height="5" fill-opacity="0.38"/><rect x="45" y="5" width="5" height="5" fill-opacity="0.40"/><rect x="50" y="5" width="5" height="5" fill-opacity="0.44"/><rect x="55" y="5" width="5" height="5" fill-opacity="0.62"/><rect x="60" y="5" width="5" height="5" fill-opacity="0.55"/><rect x="65" y="5" width="5" height="5" fill-opacity="0.58"/><rect x="70" y="5" width="5" height="5" fill-opacity="0.73"/><rect x="0" y="10" width="5" height="5" fill-opacity="0.08"/><rect x="5" y="10" width="5" height="5" fill-opacity="0.10"/><rect x="10" y="10" width="5" height="5" fill-opacity="0.21"/><rect x="15" y="10" width="5" height="5" fill-opacity="0.05"/><rect x="20" y="10" width="5" height="5" fill-opacity="0.04"/><rect x="25" y="10" width="5" height="5" fill-opacity="0.13"/><rect x="30" y="10" width="5" height="5" fill-opacity="0.07"/><rect x="35" y="10" width="5" height="5" fill-opacity="0.13"/><rect x="40" y="10" width="5" height="5" fill-opacity="0.10"/><rect x="45" y="10" width="5" height="5" fill-opacity="0.19"/><rect x="50" y="10" width="5" height="5" fill-opacity="0.19"/><rect x="55" y="10" width="5" height="5" fill-opacity="0.09"/><rect x="60" y="10" width="5" height="5" fill-opacity="0.20"/><rect x="65" y="10" width="5" height="5" fill-opacity="0.16"/><rect x="70" y="10" width="5" height="5" fill-opacity="0.08"/></g></svg><div class="cell" style="left:877px;top:601px;color:#333">Ready</div><svg class="mz" style="left:978px;top:601px" width="155" height="15"><g fill="#888"><rect x="0" y="0" width="5" height="5" fill-opacity="0.33"/><rect x="5" y="0" width="5" height="5" fill-opacity="0.12"/><rect x="10" y="0" width="5" height="5" fill-opacity="0.09"/><rect x="15" y="0" width="5" height="5" fill-opacity="0.08"/><rect x="20" y="0" width="5" height="5" fill-opacity="0.24"/><rect x="25" y="0" width="5" height="5" fill-opacity="0.31"/><rect x="30" y="0" width="5" height="5" fill-opacity="0.28"/><rect x="35" y="0" width="5" height="5" fill-opacity="0.17"/><rect x="40" y="0" width="5" height="5" fill-opacity="0.13"/><rect x="45" y="0" width="5" height="5" fill-opacity="0.05"/><rect x="50" y="0" width="5" height="5" fill-opacity="0.24"/><rect x="55" y="0" width="5" height="5" fill-opacity="0.22"/><rect x="60" y="0" width="5" height="5" fill-opacity="0.16"/><rect x="65" y="0" width="5" height="5" fill-opacity="0.24"/><rect x="70" y="0" width="5" height="5" fill-opacity="0.18"/><rect x="75" y="0" width="5" height="5" fill-opacity="0.33"/><rect x="80" y="0" width="5" height="5" fill-opacity="0.27"/><rect x="85" y="0" width="5" height="5" fill-opacity="0.12"/><rect x="90" y="0" width="5" height="5" fill-opacity="0.32"/><rect x="95" y="0" width="5" height="5" fill-opacity="0.06"/><rect x="100" y="0" width="5" height="5" fill-opacity="0.21"/><rect x="105" y="0" width="5" height="5" fill-opacity="0.17"/><rect x="110" y="0" width="5" height="5" fill-opacity="0.12"/><rect x="115" y="0" width="5" height="5" fill-opacity="0.07"/><rect x="120" y="0" width="5" height="5" fill-opacity="0.28"/><rect x="125" y="0" width="5" height="5" fill-opacity="0.05"/><rect x="130" y="0" width="5" height="5" fill-opacity="0.22"/><rect x="135" y="0" width="5" height="5" fill-opacity="0.33"/><rect x="140" y="0" width="5" height="5" fill-opacity="0.09"/><rect x="145" y="0" width="5" height="5" fill-opacity="0.11"/><rect x="150" y="0" width="5" height="5" fill-opacity="0.23"/><rect x="0" y="5" width="5" height="5" fill-opacity="0.68"/><rect x="5" y="5" width="5" height="5" fill-opacity="0.74"/><rect x="10" y="5" width="5" height="5" fill-opacity="0.82"/><rect x="15" y="5" width="5" height="5" fill-opacity="0.53"/><rect x="20" y="5" width="5" height="5" fill-opacity="0.59"/><rect x="25" y="5" width="5" height="5" fill-opacity="0.59"/><rect x="30" y="5" width="5" height="5" fill-opacity="0.47"/><rect x="35" y="5" width="5" height="5" fill-opacity="0.85"/><rect x="40" y="5" width="5" height="5" fill-opacity="0.80"/><rect x="45" y="5" width="5" height="5" fill-opacity="0.77"/><rect x="50" y="5" width="5" height="5" fill-opacity="0.45"/><rect x="55" y="5" width="5" height="5" fill-opacity="0.83"/><rect x="60" y="5" width="5" height="5" fill-opacity="0.79"/><rect x="65" y="5" width="5" height="5" fill-opacity="0.66"/><rect x="70" y="5" width="5" height="5" fill-opacity="0.78"/><rect x="75" y="5" width="5" height="5" fill-opacity="0.65"/><rect x="80" y="5" width="5" height="5" fill-opacity="0.55"/><rect x="85" y="5" width="5" height="5" fill-opacity="0.50"/><rect x="90" y="5" width="5" height="5" fill-opacity="0.55"/><rect x="95" y="5" width="5" height="5" fill-opacity="0.47"/><rect x="100" y="5" width="5" height="5" fill-opacity="0.60"/><rect x="105" y="5" width="5" height="5" fill-opacity="0.79"/><rect x="110" y="5" width="5" height="5" fill-opacity="0.76"/><rect x="115" y="5" width="5" height="5" fill-opacity="0.83"/><rect x="120" y="5" width="5" height="5" fill-opacity="0.77"/><rect x="125" y="5" width="5" height="5" fill-opacity="0.57"/><rect x="130" y="5" width="5" height="5" fill-opacity="0.70"/><rect x="135" y="5" width="5" height="5" fill-opacity="0.65"/><rect x="140" y="5" width="5" height="5" fill-opacity="0.80"/><rect x="145" y="5" width="5" height="5" fill-opacity="0.69"/><rect x="150" y="5" width="5" height="5" fill-opacity="0.57"/><rect x="0" y="10" width="5" height="5" fill-opacity="0.24"/><rect x="5" y="10" width="5" height="5" fill-opacity="0.34"/><rect x="10" y="10" width="5" height="5" fill-opacity="0.12"/><rect x="15" y="10" width="5" height="5" fill-opacity="0.31"/><rect x="20" y="10" width="5" height="5" fill-opacity="0.05"/><rect x="25" y="10" width="5" height="5" fill-opacity="0.13"/><rect x="30" y="10" width="5" height="5" fill-opacity="0.12"/><rect x="35" y="10" width="5" height="5" fill-opacity="0.27"/><rect x="40" y="10" width="5" height="5" fill-opacity="0.33"/><rect x="45" y="10" width="5" height="5" fill-opacity="0.27"/><rect x="50" y="10" width="5" height="5" fill-opacity="0.15"/><rect x="55" y="10" width="5" height="5" fill-opacity="0.31"/><rect x="60" y="10" width="5" height="5" fill-opacity="0.15"/><rect x="65" y="10" width="5" height="5" fill-opacity="0.12"/><rect x="70" y="10" width="5" height="5" fill-opacity="0.32"/><rect x="75" y="10" width="5" height="5" fill-opacity="0.24"/><rect x="80" y="10" width="5" height="5" fill-opacity="0.26"/><rect x="85" y="10" width="5" height="5" fill-opacity="0.25"/><rect x="90" y="10" width="5" height="5" fill-opacity="0.34"/><rect x="95" y="10" width="5" height="5" fill-opacity="0.19"/><rect x="100" y="10" width="5" height="5" fill-opacity="0.30"/><rect x="105" y="10" width="5" height="5" fill-opacity="0.26"/><rect x="110" y="10" width="5" height="5" fill-opacity="0.31"/><rect x="115" y="10" width="5" height="5" fill-opacity="0.18"/><rect x="120" y="10" width="5" height="5" fill-opacity="0.27"/><rect x="125" y="10" width="5" height="5" fill-opacity="0.22"/><rect x="130" y="10" width="5" height="5" fill-opacity="0.14"/><rect x="135" y="10" width="5" height="5" fill-opacity="0.11"/><rect x="140" y="10" width="5" height="5" fill-opacity="0.24"/><rect x="145" y="10" width="5" height="5" fill-opacity="0.07"/><rect x="150" y="10" width="5" height="5" fill-opacity="0.32"/></g></svg><svg class="mz" style="left:1198px;top:601px" width="30" height="15"><g fill="#888"><rect x="0" y="0" width="5" height="5" fill-opacity="0.09"/><rect x="5" y="0" width="5" height="5" fill-opacity="0.06"/><rect x="10" y="0" width="5" height="5" fill-opacity="0.08"/><rect x="15" y="0" width="5" height="5" fill-opacity="0.33"/><rect x="20" y="0" width="5" height="5" fill-opacity="0.15"/><rect x="25" y="0" width="5" height="5" fill-opacity="0.09"/><rect x="0" y="5" width="5" height="5" fill-opacity="0.46"/><rect x="5" y="5" width="5" height="5" fill-opacity="0.47"/><rect x="10" y="5" width="5" height="5" fill-opacity="0.76"/><rect x="15" y="5" width="5" height="5" fill-opacity="0.74"/><rect x="20" y="5" width="5" height="5" fill-opacity="0.76"/><rect x="25" y="5" width="5" height="5" fill-opacity="0.78"/><rect x="0" y="10" width="5" height="5" fill-opacity="0.07"/><rect x="5" y="10" width="5" height="5" fill-opacity="0.23"/><rect x="10" y="10" width="5" height="5" fill-opacity="0.16"/><rect x="15" y="10" width="5" height="5" fill-opacity="0.30"/><rect x="20" y="10" width="5" height="5" fill-opacity="0.30"/><rect x="25" y="10" width="5" height="5" fill-opacity="0.32"/></g></svg><div class="abs" style="left:30px;top:626px;width:1611px;height:36px;background:#ffffff"></div><div class="cell" style="left:38px;top:637px;color:#333">5</div><div class="abs" style="left:77px;top:638px;width:14px;height:14px;background:#fff;border:1px solid #dcdcdc;border-radius:2px"></div><div class="cell" style="left:117px;top:637px;color:#2f8fd9">TX4L</div><svg class="mz" style="left:144px;top:639px" width="105" height="10"><g fill="#5aa8dc"><rect x="0" y="0" width="5" height="5" fill-opacity="0.13"/><rect x="5" y="0" width="5" height="5" fill-opacity="0.53"/><rect x="10" y="0" width="5" height="5" fill-opacity="0.56"/><rect x="15" y="0" width="5" height="5" fill-opacity="0.57"/><rect x="20" y="0" width="5" height="5" fill-opacity="0.15"/><rect x="25" y="0" width="5" height="5" fill-opacity="0.20"/><rect x="30" y="0" width="5" height="5" fill-opacity="0.16"/><rect x="35" y="0" width="5" height="5" fill-opacity="0.12"/><rect x="40" y="0" width="5" height="5" fill-opacity="0.52"/><rect x="45" y="0" width="5" height="5" fill-opacity="0.51"/><rect x="50" y="0" width="5" height="5" fill-opacity="0.42"/><rect x="55" y="0" width="5" height="5" fill-opacity="0.51"/><rect x="60" y="0" width="5" height="5" fill-opacity="0.42"/><rect x="65" y="0" width="5" height="5" fill-opacity="0.24"/><rect x="70" y="0" width="5" height="5" fill-opacity="0.15"/><rect x="75" y="0" width="5" height="5" fill-opacity="0.15"/><rect x="80" y="0" width="5" height="5" fill-opacity="0.48"/><rect x="85" y="0" width="5" height="5" fill-opacity="0.20"/><rect x="90" y="0" width="5" height="5" fill-opacity="0.26"/><rect x="95" y="0" width="5" height="5" fill-opacity="0.31"/><rect x="100" y="0" width="5" height="5" fill-opacity="0.11"/><rect x="0" y="5" width="5" height="5" fill-opacity="0.23"/><rect x="5" y="5" width="5" height="5" fill-opacity="0.24"/><rect x="10" y="5" width="5" height="5" fill-opacity="0.46"/><rect x="15" y="5" width="5" height="5" fill-opacity="0.28"/><rect x="20" y="5" width="5" height="5" fill-opacity="0.26"/><rect x="25" y="5" width="5" height="5" fill-opacity="0.58"/><rect x="30" y="5" width="5" height="5" fill-opacity="0.35"/><rect x="35" y="5" width="5" height="5" fill-opacity="0.53"/><rect x="40" y="5" width="5" height="5" fill-opacity="0.41"/><rect x="45" y="5" width="5" height="5" fill-opacity="0.12"/><rect x="50" y="5" width="5" height="5" fill-opacity="0.31"/><rect x="55" y="5" width="5" height="5" fill-opacity="0.32"/><rect x="60" y="5" width="5" height="5" fill-opacity="0.49"/><rect x="65" y="5" width="5" height="5" fill-opacity="0.27"/><rect x="70" y="5" width="5" height="5" fill-opacity="0.45"/><rect x="75" y="5" width="5" height="5" fill-opacity="0.37"/><rect x="80" y="5" width="5" height="5" fill-opacity="0.21"/><rect x="85" y="5" width="5" height="5" fill-opacity="0.53"/><rect x="90" y="5" width="5" height="5" fill-opacity="0.15"/><rect x="95" y="5" width="5" height="5" fill-opacity="0.51"/><rect x="100" y="5" width="5" height="5" fill-opacity="0.19"/></g></svg><div class="cell" style="left:297px;top:637px;color:#333">TX4L</div><svg class="mz" style="left:322px;top:639px" width="70" height="10"><g fill="#888"><rect x="0" y="0" width="5" height="5" fill-opacity="0.10"/><rect x="5" y="0" width="5" height="5" fill-opacity="0.20"/><rect x="10" y="0" width="5" height="5" fill-opacity="0.48"/><rect x="15" y="0" width="5" height="5" fill-opacity="0.59"/><rect x="20" y="0" width="5" height="5" fill-opacity="0.10"/><rect x="25" y="0" width="5" height="5" fill-opacity="0.35"/><rect x="30" y="0" width="5" height="5" fill-opacity="0.35"/><rect x="35" y="0" width="5" height="5" fill-opacity="0.50"/><rect x="40" y="0" width="5" height="5" fill-opacity="0.19"/><rect x="45" y="0" width="5" height="5" fill-opacity="0.35"/><rect x="50" y="0" width="5" height="5" fill-opacity="0.27"/><rect x="55" y="0" width="5" height="5" fill-opacity="0.52"/><rect x="60" y="0" width="5" height="5" fill-opacity="0.23"/><rect x="65" y="0" width="5" height="5" fill-opacity="0.57"/><rect x="0" y="5" width="5" height="5" fill-opacity="0.24"/><rect x="5" y="5" width="5" height="5" fill-opacity="0.21"/><rect x="10" y="5" width="5" height="5" fill-opacity="0.45"/><rect x="15" y="5" width="5" height="5" fill-opacity="0.35"/><rect x="20" y="5" width="5" height="5" fill-opacity="0.15"/><rect x="25" y="5" width="5" height="5" fill-opacity="0.42"/><rect x="30" y="5" width="5" height="5" fill-opacity="0.14"/><rect x="35" y="5" width="5" height="5" fill-opacity="0.49"/><rect x="40" y="5" width="5" height="5" fill-opacity="0.45"/><rect x="45" y="5" width="5" height="5" fill-opacity="0.49"/><rect x="50" y="5" width="5" height="5" fill-opacity="0.41"/><rect x="55" y="5" width="5" height="5" fill-opacity="0.28"/><rect x="60" y="5" width="5" height="5" fill-opacity="0.30"/><rect x="65" y="5" width="5" height="5" fill-opacity="0.30"/></g></svg><svg class="mz" style="left:474px;top:637px" width="60" height="15"><g fill="#888"><rect x="0" y="0" width="5" height="5" fill-opacity="0.22"/><rect x="5" y="0" width="5" height="5" fill-opacity="0.05"/><rect x="10" y="0" width="5" height="5" fill-opacity="0.22"/><rect x="15" y="0" width="5" height="5" fill-opacity="0.04"/><rect x="20" y="0" width="5" height="5" fill-opacity="0.08"/><rect x="25" y="0" width="5" height="5" fill-opacity="0.09"/><rect x="30" y="0" width="5" height="5" fill-opacity="0.22"/><rect x="35" y="0" width="5" height="5" fill-opacity="0.14"/><rect x="40" y="0" width="5" height="5" fill-opacity="0.11"/><rect x="45" y="0" width="5" height="5" fill-opacity="0.22"/><rect x="50" y="0" width="5" height="5" fill-opacity="0.08"/><rect x="55" y="0" width="5" height="5" fill-opacity="0.13"/><rect x="0" y="5" width="5" height="5" fill-opacity="0.48"/><rect x="5" y="5" width="5" height="5" fill-opacity="0.55"/><rect x="10" y="5" width="5" height="5" fill-opacity="0.55"/><rect x="15" y="5" width="5" height="5" fill-opacity="0.52"/><rect x="20" y="5" width="5" height="5" fill-opacity="0.42"/><rect x="25" y="5" width="5" height="5" fill-opacity="0.42"/><rect x="30" y="5" width="5" height="5" fill-opacity="0.36"/><rect x="35" y="5" width="5" height="5" fill-opacity="0.58"/><rect x="40" y="5" width="5" height="5" fill-opacity="0.52"/><rect x="45" y="5" width="5" height="5" fill-opacity="0.55"/><rect x="50" y="5" width="5" height="5" fill-opacity="0.37"/><rect x="55" y="5" width="5" height="5" fill-opacity="0.45"/><rect x="0" y="10" width="5" height="5" fill-opacity="0.20"/><rect x="5" y="10" width="5" height="5" fill-opacity="0.16"/><rect x="10" y="10" width="5" height="5" fill-opacity="0.06"/><rect x="15" y="10" width="5" height="5" fill-opacity="0.13"/><rect x="20" y="10" width="5" height="5" fill-opacity="0.22"/><rect x="25" y="10" width="5" height="5" fill-opacity="0.08"/><rect x="30" y="10" width="5" height="5" fill-opacity="0.08"/><rect x="35" y="10" width="5" height="5" fill-opacity="0.10"/><rect x="40" y="10" width="5" height="5" fill-opacity="0.18"/><rect x="45" y="10" width="5" height="5" fill-opacity="0.21"/><rect x="50" y="10" width="5" height="5" fill-opacity="0.07"/><rect x="55" y="10" width="5" height="5" fill-opacity="0.07"/></g></svg><svg class="mz" style="left:626px;top:637px" width="60" height="15"><g fill="#888"><rect x="0" y="0" width="5" height="5" fill-opacity="0.09"/><rect x="5" y="0" width="5" height="5" fill-opacity="0.10"/><rect x="10" y="0" width="5" height="5" fill-opacity="0.14"/><rect x="15" y="0" width="5" height="5" fill-opacity="0.07"/><rect x="20" y="0" width="5" height="5" fill-opacity="0.10"/><rect x="25" y="0" width="5" height="5" fill-opacity="0.07"/><rect x="30" y="0" width="5" height="5" fill-opacity="0.24"/><rect x="35" y="0" width="5" height="5" fill-opacity="0.19"/><rect x="40" y="0" width="5" height="5" fill-opacity="0.06"/><rect x="45" y="0" width="5" height="5" fill-opacity="0.24"/><rect x="50" y="0" width="5" height="5" fill-opacity="0.06"/><rect x="55" y="0" width="5" height="5" fill-opacity="0.12"/><rect x="0" y="5" width="5" height="5" fill-opacity="0.62"/><rect x="5" y="5" width="5" height="5" fill-opacity="0.57"/><rect x="10" y="5" width="5" height="5" fill-opacity="0.55"/><rect x="15" y="5" width="5" height="5" fill-opacity="0.45"/><rect x="20" y="5" width="5" height="5" fill-opacity="0.38"/><rect x="25" y="5" width="5" height="5" fill-opacity="0.52"/><rect x="30" y="5" width="5" height="5" fill-opacity="0.35"/><rect x="35" y="5" width="5" height="5" fill-opacity="0.38"/><rect x="40" y="5" width="5" height="5" fill-opacity="0.44"/><rect x="45" y="5" width="5" height="5" fill-opacity="0.33"/><rect x="50" y="5" width="5" height="5" fill-opacity="0.44"/><rect x="55" y="5" width="5" height="5" fill-opacity="0.56"/><rect x="0" y="10" width="5" height="5" fill-opacity="0.18"/><rect x="5" y="10" width="5" height="5" fill-opacity="0.14"/><rect x="10" y="10" width="5" height="5" fill-opacity="0.17"/><rect x="15" y="10" width="5" height="5" fill-opacity="0.13"/><rect x="20" y="10" width="5" height="5" fill-opacity="0.06"/><rect x="25" y="10" width="5" height="5" fill-opacity="0.16"/><rect x="30" y="10" width="5" height="5" fill-opacity="0.12"/><rect x="35" y="10" width="5" height="5" fill-opacity="0.19"/><rect x="40" y="10" width="5" height="5" fill-opacity="0.23"/><rect x="45" y="10" width="5" height="5" fill-opacity="0.13"/><rect x="50" y="10" width="5" height="5" fill-opacity="0.16"/><rect x="55" y="10" width="5" height="5" fill-opacity="0.19"/></g></svg><svg class="mz" style="left:777px;top:637px" width="75" height="15"><g fill="#888"><rect x="0" y="0" width="5" height="5" fill-opacity="0.15"/><rect x="5" y="0" width="5" height="5" fill-opacity="0.10"/><rect x="10" y="0" width="5" height="5" fill-opacity="0.23"/><rect x="15" y="0" width="5" height="5" fill-opacity="0.27"/><rect x="20" y="0" width="5" height="5" fill-opacity="0.24"/><rect x="25" y="0" width="5" height="5" fill-opacity="0.22"/><rect x="30" y="0" width="5" height="5" fill-opacity="0.26"/><rect x="35" y="0" width="5" height="5" fill-opacity="0.22"/><rect x="40" y="0" width="5" height="5" fill-opacity="0.21"/><rect x="45" y="0" width="5" height="5" fill-opacity="0.16"/><rect x="50" y="0" width="5" height="5" fill-opacity="0.12"/><rect x="55" y="0" width="5" height="5" fill-opacity="0.20"/><rect x="60" y="0" width="5" height="5" fill-opacity="0.07"/><rect x="65" y="0" width="5" height="5" fill-opacity="0.15"/><rect x="70" y="0" width="5" height="5" fill-opacity="0.24"/><rect x="0" y="5" width="5" height="5" fill-opacity="0.66"/><rect x="5" y="5" width="5" height="5" fill-opacity="0.62"/><rect x="10" y="5" width="5" height="5" fill-opacity="0.48"/><rect x="15" y="5" width="5" height="5" fill-opacity="0.54"/><rect x="20" y="5" width="5" height="5" fill-opacity="0.56"/><rect x="25" y="5" width="5" height="5" fill-opacity="0.62"/><rect x="30" y="5" width="5" height="5" fill-opacity="0.54"/><rect x="35" y="5" width="5" height="5" fill-opacity="0.64"/><rect x="40" y="5" width="5" height="5" fill-opacity="0.74"/><rect x="45" y="5" width="5" height="5" fill-opacity="0.45"/><rect x="50" y="5" width="5" height="5" fill-opacity="0.63"/><rect x="55" y="5" width="5" height="5" fill-opacity="0.68"/><rect x="60" y="5" width="5" height="5" fill-opacity="0.53"/><rect x="65" y="5" width="5" height="5" fill-opacity="0.57"/><rect x="70" y="5" width="5" height="5" fill-opacity="0.76"/><rect x="0" y="10" width="5" height="5" fill-opacity="0.05"/><rect x="5" y="10" width="5" height="5" fill-opacity="0.18"/><rect x="10" y="10" width="5" height="5" fill-opacity="0.08"/><rect x="15" y="10" width="5" height="5" fill-opacity="0.24"/><rect x="20" y="10" width="5" height="5" fill-opacity="0.28"/><rect x="25" y="10" width="5" height="5" fill-opacity="0.17"/><rect x="30" y="10" width="5" height="5" fill-opacity="0.07"/><rect x="35" y="10" width="5" height="5" fill-opacity="0.19"/><rect x="40" y="10" width="5" height="5" fill-opacity="0.18"/><rect x="45" y="10" width="5" height="5" fill-opacity="0.23"/><rect x="50" y="10" width="5" height="5" fill-opacity="0.17"/><rect x="55" y="10" width="5" height="5" fill-opacity="0.21"/><rect x="60" y="10" width="5" height="5" fill-opacity="0.25"/><rect x="65" y="10" width="5" height="5" fill-opacity="0.18"/><rect x="70" y="10" width="5" height="5" fill-opacity="0.15"/></g></svg><div class="cell" style="left:877px;top:637px;color:#333">Ready</div><svg class="mz" style="left:978px;top:637px" width="155" height="15"><g fill="#888"><rect x="0" y="0" width="5" height="5" fill-opacity="0.33"/><rect x="5" y="0" width="5" height="5" fill-opacity="0.11"/><rect x="10" y="0" width="5" height="5" fill-opacity="0.26"/><rect x="15" y="0" width="5" height="5" fill-opacity="0.17"/><rect x="20" y="0" width="5" height="5" fill-opacity="0.28"/><rect x="25" y="0" width="5" height="5" fill-opacity="0.09"/><rect x="30" y="0" width="5" height="5" fill-opacity="0.35"/><rect x="35" y="0" width="5" height="5" fill-opacity="0.16"/><rect x="40" y="0" width="5" height="5" fill-opacity="0.07"/><rect x="45" y="0" width="5" height="5" fill-opacity="0.13"/><rect x="50" y="0" width="5" height="5" fill-opacity="0.17"/><rect x="55" y="0" width="5" height="5" fill-opacity="0.05"/><rect x="60" y="0" width="5" height="5" fill-opacity="0.18"/><rect x="65" y="0" width="5" height="5" fill-opacity="0.18"/><rect x="70" y="0" width="5" height="5" fill-opacity="0.26"/><rect x="75" y="0" width="5" height="5" fill-opacity="0.16"/><rect x="80" y="0" width="5" height="5" fill-opacity="0.13"/><rect x="85" y="0" width="5" height="5" fill-opacity="0.12"/><rect x="90" y="0" width="5" height="5" fill-opacity="0.27"/><rect x="95" y="0" width="5" height="5" fill-opacity="0.33"/><rect x="100" y="0" width="5" height="5" fill-opacity="0.21"/><rect x="105" y="0" width="5" height="5" fill-opacity="0.12"/><rect x="110" y="0" width="5" height="5" fill-opacity="0.29"/><rect x="115" y="0" width="5" height="5" fill-opacity="0.17"/><rect x="120" y="0" width="5" height="5" fill-opacity="0.11"/><rect x="125" y="0" width="5" height="5" fill-opacity="0.09"/><rect x="130" y="0" width="5" height="5" fill-opacity="0.28"/><rect x="135" y="0" width="5" height="5" fill-opacity="0.29"/><rect x="140" y="0" width="5" height="5" fill-opacity="0.24"/><rect x="145" y="0" width="5" height="5" fill-opacity="0.19"/><rect x="150" y="0" width="5" height="5" fill-opacity="0.22"/><rect x="0" y="5" width="5" height="5" fill-opacity="0.55"/><rect x="5" y="5" width="5" height="5" fill-opacity="0.88"/><rect x="10" y="5" width="5" height="5" fill-opacity="0.61"/><rect x="15" y="5" width="5" height="5" fill-opacity="0.74"/><rect x="20" y="5" width="5" height="5" fill-opacity="0.82"/><rect x="25" y="5" width="5" height="5" fill-opacity="0.82"/><rect x="30" y="5" width="5" height="5" fill-opacity="0.66"/><rect x="35" y="5" width="5" height="5" fill-opacity="0.58"/><rect x="40" y="5" width="5" height="5" fill-opacity="0.70"/><rect x="45" y="5" width="5" height="5" fill-opacity="0.51"/><rect x="50" y="5" width="5" height="5" fill-opacity="0.83"/><rect x="55" y="5" width="5" height="5" fill-opacity="0.61"/><rect x="60" y="5" width="5" height="5" fill-opacity="0.83"/><rect x="65" y="5" width="5" height="5" fill-opacity="0.57"/><rect x="70" y="5" width="5" height="5" fill-opacity="0.62"/><rect x="75" y="5" width="5" height="5" fill-opacity="0.56"/><rect x="80" y="5" width="5" height="5" fill-opacity="0.64"/><rect x="85" y="5" width="5" height="5" fill-opacity="0.53"/><rect x="90" y="5" width="5" height="5" fill-opacity="0.45"/><rect x="95" y="5" width="5" height="5" fill-opacity="0.77"/><rect x="100" y="5" width="5" height="5" fill-opacity="0.58"/><rect x="105" y="5" width="5" height="5" fill-opacity="0.56"/><rect x="110" y="5" width="5" height="5" fill-opacity="0.59"/><rect x="115" y="5" width="5" height="5" fill-opacity="0.67"/><rect x="120" y="5" width="5" height="5" fill-opacity="0.64"/><rect x="125" y="5" width="5" height="5" fill-opacity="0.74"/><rect x="130" y="5" width="5" height="5" fill-opacity="0.75"/><rect x="135" y="5" width="5" height="5" fill-opacity="0.61"/><rect x="140" y="5" width="5" height="5" fill-opacity="0.87"/><rect x="145" y="5" width="5" height="5" fill-opacity="0.83"/><rect x="150" y="5" width="5" height="5" fill-opacity="0.48"/><rect x="0" y="10" width="5" height="5" fill-opacity="0.30"/><rect x="5" y="10" width="5" height="5" fill-opacity="0.32"/><rect x="10" y="10" width="5" height="5" fill-opacity="0.29"/><rect x="15" y="10" width="5" height="5" fill-opacity="0.09"/><rect x="20" y="10" width="5" height="5" fill-opacity="0.30"/><rect x="25" y="10" width="5" height="5" fill-opacity="0.24"/><rect x="30" y="10" width="5" height="5" fill-opacity="0.05"/><rect x="35" y="10" width="5" height="5" fill-opacity="0.05"/><rect x="40" y="10" width="5" height="5" fill-opacity="0.34"/><rect x="45" y="10" width="5" height="5" fill-opacity="0.25"/><rect x="50" y="10" width="5" height="5" fill-opacity="0.13"/><rect x="55" y="10" width="5" height="5" fill-opacity="0.08"/><rect x="60" y="10" width="5" height="5" fill-opacity="0.09"/><rect x="65" y="10" width="5" height="5" fill-opacity="0.12"/><rect x="70" y="10" width="5" height="5" fill-opacity="0.28"/><rect x="75" y="10" width="5" height="5" fill-opacity="0.15"/><rect x="80" y="10" width="5" height="5" fill-opacity="0.10"/><rect x="85" y="10" width="5" height="5" fill-opacity="0.32"/><rect x="90" y="10" width="5" height="5" fill-opacity="0.29"/><rect x="95" y="10" width="5" height="5" fill-opacity="0.10"/><rect x="100" y="10" width="5" height="5" fill-opacity="0.32"/><rect x="105" y="10" width="5" height="5" fill-opacity="0.23"/><rect x="110" y="10" width="5" height="5" fill-opacity="0.28"/><rect x="115" y="10" width="5" height="5" fill-opacity="0.25"/><rect x="120" y="10" width="5" height="5" fill-opacity="0.32"/><rect x="125" y="10" width="5" height="5" fill-opacity="0.29"/><rect x="130" y="10" width="5" height="5" fill-opacity="0.30"/><rect x="135" y="10" width="5" height="5" fill-opacity="0.11"/><rect x="140" y="10" width="5" height="5" fill-opacity="0.26"/><rect x="145" y="10" width="5" height="5" fill-opacity="0.21"/><rect x="150" y="10" width="5" height="5" fill-opacity="0.27"/></g></svg><svg class="mz" style="left:1198px;top:637px" width="30" height="15"><g fill="#888"><rect x="0" y="0" width="5" height="5" fill-opacity="0.18"/><rect x="5" y="0" width="5" height="5" fill-opacity="0.31"/><rect x="10" y="0" width="5" height="5" fill-opacity="0.22"/><rect x="15" y="0" width="5" height="5" fill-opacity="0.13"/><rect x="20" y="0" width="5" height="5" fill-opacity="0.12"/><rect x="25" y="0" width="5" height="5" fill-opacity="0.09"/><rect x="0" y="5" width="5" height="5" fill-opacity="0.67"/><rect x="5" y="5" width="5" height="5" fill-opacity="0.48"/><rect x="10" y="5" width="5" height="5" fill-opacity="0.66"/><rect x="15" y="5" width="5" height="5" fill-opacity="0.51"/><rect x="20" y="5" width="5" height="5" fill-opacity="0.67"/><rect x="25" y="5" width="5" height="5" fill-opacity="0.67"/><rect x="0" y="10" width="5" height="5" fill-opacity="0.21"/><rect x="5" y="10" width="5" height="5" fill-opacity="0.31"/><rect x="10" y="10" width="5" height="5" fill-opacity="0.05"/><rect x="15" y="10" width="5" height="5" fill-opacity="0.30"/><rect x="20" y="10" width="5" height="5" fill-opacity="0.19"/><rect x="25" y="10" width="5" height="5" fill-opacity="0.22"/></g></svg><div class="abs" style="left:30px;top:662px;width:1611px;height:36px;background:#f3f3f3"></div><div class="cell" style="left:38px;top:673px;color:#333">6</div><div class="abs" style="left:77px;top:674px;width:14px;height:14px;background:#fff;border:1px solid #dcdcdc;border-radius:2px"></div><div class="cell" style="left:117px;top:673px;color:#2f8fd9">TX4L</div><svg class="mz" style="left:144px;top:675px" width="105" height="10"><g fill="#5aa8dc"><rect x="0" y="0" width="5" height="5" fill-opacity="0.43"/><rect x="5" y="0" width="5" height="5" fill-opacity="0.52"/><rect x="10" y="0" width="5" height="5" fill-opacity="0.29"/><rect x="15" y="0" width="5" height="5" fill-opacity="0.31"/><rect x="20" y="0" width="5" height="5" fill-opacity="0.58"/><rect x="25" y="0" width="5" height="5" fill-opacity="0.14"/><rect x="30" y="0" width="5" height="5" fill-opacity="0.42"/><rect x="35" y="0" width="5" height="5" fill-opacity="0.42"/><rect x="40" y="0" width="5" height="5" fill-opacity="0.11"/><rect x="45" y="0" width="5" height="5" fill-opacity="0.40"/><rect x="50" y="0" width="5" height="5" fill-opacity="0.44"/><rect x="55" y="0" width="5" height="5" fill-opacity="0.57"/><rect x="60" y="0" width="5" height="5" fill-opacity="0.27"/><rect x="65" y="0" width="5" height="5" fill-opacity="0.59"/><rect x="70" y="0" width="5" height="5" fill-opacity="0.36"/><rect x="75" y="0" width="5" height="5" fill-opacity="0.34"/><rect x="80" y="0" width="5" height="5" fill-opacity="0.55"/><rect x="85" y="0" width="5" height="5" fill-opacity="0.12"/><rect x="90" y="0" width="5" height="5" fill-opacity="0.46"/><rect x="95" y="0" width="5" height="5" fill-opacity="0.41"/><rect x="100" y="0" width="5" height="5" fill-opacity="0.27"/><rect x="0" y="5" width="5" height="5" fill-opacity="0.53"/><rect x="5" y="5" width="5" height="5" fill-opacity="0.28"/><rect x="10" y="5" width="5" height="5" fill-opacity="0.34"/><rect x="15" y="5" width="5" height="5" fill-opacity="0.36"/><rect x="20" y="5" width="5" height="5" fill-opacity="0.49"/><rect x="25" y="5" width="5" height="5" fill-opacity="0.21"/><rect x="30" y="5" width="5" height="5" fill-opacity="0.32"/><rect x="35" y="5" width="5" height="5" fill-opacity="0.31"/><rect x="40" y="5" width="5" height="5" fill-opacity="0.38"/><rect x="45" y="5" width="5" height="5" fill-opacity="0.51"/><rect x="50" y="5" width="5" height="5" fill-opacity="0.25"/><rect x="55" y="5" width="5" height="5" fill-opacity="0.51"/><rect x="60" y="5" width="5" height="5" fill-opacity="0.30"/><rect x="65" y="5" width="5" height="5" fill-opacity="0.35"/><rect x="70" y="5" width="5" height="5" fill-opacity="0.24"/><rect x="75" y="5" width="5" height="5" fill-opacity="0.35"/><rect x="80" y="5" width="5" height="5" fill-opacity="0.59"/><rect x="85" y="5" width="5" height="5" fill-opacity="0.43"/><rect x="90" y="5" width="5" height="5" fill-opacity="0.50"/><rect x="95" y="5" width="5" height="5" fill-opacity="0.27"/><rect x="100" y="5" width="5" height="5" fill-opacity="0.26"/></g></svg><div class="cell" style="left:297px;top:673px;color:#333">TX4L</div><svg class="mz" style="left:322px;top:675px" width="65" height="10"><g fill="#888"><rect x="0" y="0" width="5" height="5" fill-opacity="0.25"/><rect x="5" y="0" width="5" height="5" fill-opacity="0.39"/><rect x="10" y="0" width="5" height="5" fill-opacity="0.42"/><rect x="15" y="0" width="5" height="5" fill-opacity="0.49"/><rect x="20" y="0" width="5" height="5" fill-opacity="0.12"/><rect x="25" y="0" width="5" height="5" fill-opacity="0.46"/><rect x="30" y="0" width="5" height="5" fill-opacity="0.54"/><rect x="35" y="0" width="5" height="5" fill-opacity="0.37"/><rect x="40" y="0" width="5" height="5" fill-opacity="0.12"/><rect x="45" y="0" width="5" height="5" fill-opacity="0.25"/><rect x="50" y="0" width="5" height="5" fill-opacity="0.10"/><rect x="55" y="0" width="5" height="5" fill-opacity="0.19"/><rect x="60" y="0" width="5" height="5" fill-opacity="0.56"/><rect x="0" y="5" width="5" height="5" fill-opacity="0.40"/><rect x="5" y="5" width="5" height="5" fill-opacity="0.43"/><rect x="10" y="5" width="5" height="5" fill-opacity="0.49"/><rect x="15" y="5" width="5" height="5" fill-opacity="0.55"/><rect x="20" y="5" width="5" height="5" fill-opacity="0.41"/><rect x="25" y="5" width="5" height="5" fill-opacity="0.41"/><rect x="30" y="5" width="5" height="5" fill-opacity="0.41"/><rect x="35" y="5" width="5" height="5" fill-opacity="0.45"/><rect x="40" y="5" width="5" height="5" fill-opacity="0.40"/><rect x="45" y="5" width="5" height="5" fill-opacity="0.44"/><rect x="50" y="5" width="5" height="5" fill-opacity="0.21"/><rect x="55" y="5" width="5" height="5" fill-opacity="0.43"/><rect x="60" y="5" width="5" height="5" fill-opacity="0.33"/></g></svg><svg class="mz" style="left:474px;top:673px" width="60" height="15"><g fill="#888"><rect x="0" y="0" width="5" height="5" fill-opacity="0.20"/><rect x="5" y="0" width="5" height="5" fill-opacity="0.06"/><rect x="10" y="0" width="5" height="5" fill-opacity="0.07"/><rect x="15" y="0" width="5" height="5" fill-opacity="0.04"/><rect x="20" y="0" width="5" height="5" fill-opacity="0.20"/><rect x="25" y="0" width="5" height="5" fill-opacity="0.23"/><rect x="30" y="0" width="5" height="5" fill-opacity="0.17"/><rect x="35" y="0" width="5" height="5" fill-opacity="0.11"/><rect x="40" y="0" width="5" height="5" fill-opacity="0.21"/><rect x="45" y="0" width="5" height="5" fill-opacity="0.20"/><rect x="50" y="0" width="5" height="5" fill-opacity="0.15"/><rect x="55" y="0" width="5" height="5" fill-opacity="0.09"/><rect x="0" y="5" width="5" height="5" fill-opacity="0.41"/><rect x="5" y="5" width="5" height="5" fill-opacity="0.45"/><rect x="10" y="5" width="5" height="5" fill-opacity="0.42"/><rect x="15" y="5" width="5" height="5" fill-opacity="0.45"/><rect x="20" y="5" width="5" height="5" fill-opacity="0.52"/><rect x="25" y="5" width="5" height="5" fill-opacity="0.61"/><rect x="30" y="5" width="5" height="5" fill-opacity="0.33"/><rect x="35" y="5" width="5" height="5" fill-opacity="0.49"/><rect x="40" y="5" width="5" height="5" fill-opacity="0.33"/><rect x="45" y="5" width="5" height="5" fill-opacity="0.35"/><rect x="50" y="5" width="5" height="5" fill-opacity="0.57"/><rect x="55" y="5" width="5" height="5" fill-opacity="0.50"/><rect x="0" y="10" width="5" height="5" fill-opacity="0.23"/><rect x="5" y="10" width="5" height="5" fill-opacity="0.13"/><rect x="10" y="10" width="5" height="5" fill-opacity="0.04"/><rect x="15" y="10" width="5" height="5" fill-opacity="0.12"/><rect x="20" y="10" width="5" height="5" fill-opacity="0.16"/><rect x="25" y="10" width="5" height="5" fill-opacity="0.23"/><rect x="30" y="10" width="5" height="5" fill-opacity="0.24"/><rect x="35" y="10" width="5" height="5" fill-opacity="0.13"/><rect x="40" y="10" width="5" height="5" fill-opacity="0.12"/><rect x="45" y="10" width="5" height="5" fill-opacity="0.06"/><rect x="50" y="10" width="5" height="5" fill-opacity="0.17"/><rect x="55" y="10" width="5" height="5" fill-opacity="0.08"/></g></svg><svg class="mz" style="left:626px;top:673px" width="60" height="15"><g fill="#888"><rect x="0" y="0" width="5" height="5" fill-opacity="0.07"/><rect x="5" y="0" width="5" height="5" fill-opacity="0.04"/><rect x="10" y="0" width="5" height="5" fill-opacity="0.04"/><rect x="15" y="0" width="5" height="5" fill-opacity="0.18"/><rect x="20" y="0" width="5" height="5" fill-opacity="0.06"/><rect x="25" y="0" width="5" height="5" fill-opacity="0.24"/><rect x="30" y="0" width="5" height="5" fill-opacity="0.05"/><rect x="35" y="0" width="5" height="5" fill-opacity="0.22"/><rect x="40" y="0" width="5" height="5" fill-opacity="0.06"/><rect x="45" y="0" width="5" height="5" fill-opacity="0.04"/><rect x="50" y="0" width="5" height="5" fill-opacity="0.19"/><rect x="55" y="0" width="5" height="5" fill-opacity="0.09"/><rect x="0" y="5" width="5" height="5" fill-opacity="0.55"/><rect x="5" y="5" width="5" height="5" fill-opacity="0.37"/><rect x="10" y="5" width="5" height="5" fill-opacity="0.33"/><rect x="15" y="5" width="5" height="5" fill-opacity="0.56"/><rect x="20" y="5" width="5" height="5" fill-opacity="0.54"/><rect x="25" y="5" width="5" height="5" fill-opacity="0.58"/><rect x="30" y="5" width="5" height="5" fill-opacity="0.54"/><rect x="35" y="5" width="5" height="5" fill-opacity="0.34"/><rect x="40" y="5" width="5" height="5" fill-opacity="0.51"/><rect x="45" y="5" width="5" height="5" fill-opacity="0.54"/><rect x="50" y="5" width="5" height="5" fill-opacity="0.46"/><rect x="55" y="5" width="5" height="5" fill-opacity="0.61"/><rect x="0" y="10" width="5" height="5" fill-opacity="0.09"/><rect x="5" y="10" width="5" height="5" fill-opacity="0.24"/><rect x="10" y="10" width="5" height="5" fill-opacity="0.19"/><rect x="15" y="10" width="5" height="5" fill-opacity="0.04"/><rect x="20" y="10" width="5" height="5" fill-opacity="0.04"/><rect x="25" y="10" width="5" height="5" fill-opacity="0.17"/><rect x="30" y="10" width="5" height="5" fill-opacity="0.21"/><rect x="35" y="10" width="5" height="5" fill-opacity="0.05"/><rect x="40" y="10" width="5" height="5" fill-opacity="0.10"/><rect x="45" y="10" width="5" height="5" fill-opacity="0.19"/><rect x="50" y="10" width="5" height="5" fill-opacity="0.07"/><rect x="55" y="10" width="5" height="5" fill-opacity="0.22"/></g></svg><svg class="mz" style="left:777px;top:673px" width="75" height="15"><g fill="#888"><rect x="0" y="0" width="5" height="5" fill-opacity="0.17"/><rect x="5" y="0" width="5" height="5" fill-opacity="0.06"/><rect x="10" y="0" width="5" height="5" fill-opacity="0.14"/><rect x="15" y="0" width="5" height="5" fill-opacity="0.19"/><rect x="20" y="0" width="5" height="5" fill-opacity="0.15"/><rect x="25" y="0" width="5" height="5" fill-opacity="0.22"/><rect x="30" y="0" width="5" height="5" fill-opacity="0.08"/><rect x="35" y="0" width="5" height="5" fill-opacity="0.25"/><rect x="40" y="0" width="5" height="5" fill-opacity="0.14"/><rect x="45" y="0" width="5" height="5" fill-opacity="0.21"/><rect x="50" y="0" width="5" height="5" fill-opacity="0.20"/><rect x="55" y="0" width="5" height="5" fill-opacity="0.15"/><rect x="60" y="0" width="5" height="5" fill-opacity="0.14"/><rect x="65" y="0" width="5" height="5" fill-opacity="0.24"/><rect x="70" y="0" width="5" height="5" fill-opacity="0.28"/><rect x="0" y="5" width="5" height="5" fill-opacity="0.68"/><rect x="5" y="5" width="5" height="5" fill-opacity="0.60"/><rect x="10" y="5" width="5" height="5" fill-opacity="0.49"/><rect x="15" y="5" width="5" height="5" fill-opacity="0.41"/><rect x="20" y="5" width="5" height="5" fill-opacity="0.76"/><rect x="25" y="5" width="5" height="5" fill-opacity="0.65"/><rect x="30" y="5" width="5" height="5" fill-opacity="0.70"/><rect x="35" y="5" width="5" height="5" fill-opacity="0.51"/><rect x="40" y="5" width="5" height="5" fill-opacity="0.61"/><rect x="45" y="5" width="5" height="5" fill-opacity="0.76"/><rect x="50" y="5" width="5" height="5" fill-opacity="0.70"/><rect x="55" y="5" width="5" height="5" fill-opacity="0.61"/><rect x="60" y="5" width="5" height="5" fill-opacity="0.50"/><rect x="65" y="5" width="5" height="5" fill-opacity="0.55"/><rect x="70" y="5" width="5" height="5" fill-opacity="0.72"/><rect x="0" y="10" width="5" height="5" fill-opacity="0.14"/><rect x="5" y="10" width="5" height="5" fill-opacity="0.22"/><rect x="10" y="10" width="5" height="5" fill-opacity="0.20"/><rect x="15" y="10" width="5" height="5" fill-opacity="0.27"/><rect x="20" y="10" width="5" height="5" fill-opacity="0.25"/><rect x="25" y="10" width="5" height="5" fill-opacity="0.11"/><rect x="30" y="10" width="5" height="5" fill-opacity="0.04"/><rect x="35" y="10" width="5" height="5" fill-opacity="0.11"/><rect x="40" y="10" width="5" height="5" fill-opacity="0.15"/><rect x="45" y="10" width="5" height="5" fill-opacity="0.19"/><rect x="50" y="10" width="5" height="5" fill-opacity="0.25"/><rect x="55" y="10" width="5" height="5" fill-opacity="0.27"/><rect x="60" y="10" width="5" height="5" fill-opacity="0.05"/><rect x="65" y="10" width="5" height="5" fill-opacity="0.25"/><rect x="70" y="10" width="5" height="5" fill-opacity="0.25"/></g></svg><div class="cell" style="left:877px;top:673px;color:#333">Ready</div><svg class="mz" style="left:978px;top:673px" width="155" height="15"><g fill="#888"><rect x="0" y="0" width="5" height="5" fill-opacity="0.31"/><rect x="5" y="0" width="5" height="5" fill-opacity="0.22"/><rect x="10" y="0" width="5" height="5" fill-opacity="0.13"/><rect x="15" y="0" width="5" height="5" fill-opacity="0.31"/><rect x="20" y="0" width="5" height="5" fill-opacity="0.29"/><rect x="25" y="0" width="5" height="5" fill-opacity="0.26"/><rect x="30" y="0" width="5" height="5" fill-opacity="0.32"/><rect x="35" y="0" width="5" height="5" fill-opacity="0.15"/><rect x="40" y="0" width="5" height="5" fill-opacity="0.08"/><rect x="45" y="0" width="5" height="5" fill-opacity="0.22"/><rect x="50" y="0" width="5" height="5" fill-opacity="0.29"/><rect x="55" y="0" width="5" height="5" fill-opacity="0.11"/><rect x="60" y="0" width="5" height="5" fill-opacity="0.28"/><rect x="65" y="0" width="5" height="5" fill-opacity="0.33"/><rect x="70" y="0" width="5" height="5" fill-opacity="0.12"/><rect x="75" y="0" width="5" height="5" fill-opacity="0.23"/><rect x="80" y="0" width="5" height="5" fill-opacity="0.25"/><rect x="85" y="0" width="5" height="5" fill-opacity="0.19"/><rect x="90" y="0" width="5" height="5" fill-opacity="0.11"/><rect x="95" y="0" width="5" height="5" fill-opacity="0.13"/><rect x="100" y="0" width="5" height="5" fill-opacity="0.28"/><rect x="105" y="0" width="5" height="5" fill-opacity="0.29"/><rect x="110" y="0" width="5" height="5" fill-opacity="0.19"/><rect x="115" y="0" width="5" height="5" fill-opacity="0.08"/><rect x="120" y="0" width="5" height="5" fill-opacity="0.29"/><rect x="125" y="0" width="5" height="5" fill-opacity="0.28"/><rect x="130" y="0" width="5" height="5" fill-opacity="0.12"/><rect x="135" y="0" width="5" height="5" fill-opacity="0.22"/><rect x="140" y="0" width="5" height="5" fill-opacity="0.32"/><rect x="145" y="0" width="5" height="5" fill-opacity="0.32"/><rect x="150" y="0" width="5" height="5" fill-opacity="0.21"/><rect x="0" y="5" width="5" height="5" fill-opacity="0.66"/><rect x="5" y="5" width="5" height="5" fill-opacity="0.72"/><rect x="10" y="5" width="5" height="5" fill-opacity="0.54"/><rect x="15" y="5" width="5" height="5" fill-opacity="0.54"/><rect x="20" y="5" width="5" height="5" fill-opacity="0.53"/><rect x="25" y="5" width="5" height="5" fill-opacity="0.77"/><rect x="30" y="5" width="5" height="5" fill-opacity="0.61"/><rect x="35" y="5" width="5" height="5" fill-opacity="0.70"/><rect x="40" y="5" width="5" height="5" fill-opacity="0.63"/><rect x="45" y="5" width="5" height="5" fill-opacity="0.68"/><rect x="50" y="5" width="5" height="5" fill-opacity="0.52"/><rect x="55" y="5" width="5" height="5" fill-opacity="0.47"/><rect x="60" y="5" width="5" height="5" fill-opacity="0.90"/><rect x="65" y="5" width="5" height="5" fill-opacity="0.62"/><rect x="70" y="5" width="5" height="5" fill-opacity="0.50"/><rect x="75" y="5" width="5" height="5" fill-opacity="0.73"/><rect x="80" y="5" width="5" height="5" fill-opacity="0.80"/><rect x="85" y="5" width="5" height="5" fill-opacity="0.52"/><rect x="90" y="5" width="5" height="5" fill-opacity="0.72"/><rect x="95" y="5" width="5" height="5" fill-opacity="0.61"/><rect x="100" y="5" width="5" height="5" fill-opacity="0.68"/><rect x="105" y="5" width="5" height="5" fill-opacity="0.46"/><rect x="110" y="5" width="5" height="5" fill-opacity="0.47"/><rect x="115" y="5" width="5" height="5" fill-opacity="0.90"/><rect x="120" y="5" width="5" height="5" fill-opacity="0.84"/><rect x="125" y="5" width="5" height="5" fill-opacity="0.67"/><rect x="130" y="5" width="5" height="5" fill-opacity="0.71"/><rect x="135" y="5" width="5" height="5" fill-opacity="0.57"/><rect x="140" y="5" width="5" height="5" fill-opacity="0.80"/><rect x="145" y="5" width="5" height="5" fill-opacity="0.64"/><rect x="150" y="5" width="5" height="5" fill-opacity="0.88"/><rect x="0" y="10" width="5" height="5" fill-opacity="0.28"/><rect x="5" y="10" width="5" height="5" fill-opacity="0.30"/><rect x="10" y="10" width="5" height="5" fill-opacity="0.34"/><rect x="15" y="10" width="5" height="5" fill-opacity="0.13"/><rect x="20" y="10" width="5" height="5" fill-opacity="0.06"/><rect x="25" y="10" width="5" height="5" fill-opacity="0.11"/><rect x="30" y="10" width="5" height="5" fill-opacity="0.10"/><rect x="35" y="10" width="5" height="5" fill-opacity="0.08"/><rect x="40" y="10" width="5" height="5" fill-opacity="0.07"/><rect x="45" y="10" width="5" height="5" fill-opacity="0.22"/><rect x="50" y="10" width="5" height="5" fill-opacity="0.31"/><rect x="55" y="10" width="5" height="5" fill-opacity="0.19"/><rect x="60" y="10" width="5" height="5" fill-opacity="0.33"/><rect x="65" y="10" width="5" height="5" fill-opacity="0.32"/><rect x="70" y="10" width="5" height="5" fill-opacity="0.07"/><rect x="75" y="10" width="5" height="5" fill-opacity="0.23"/><rect x="80" y="10" width="5" height="5" fill-opacity="0.17"/><rect x="85" y="10" width="5" height="5" fill-opacity="0.09"/><rect x="90" y="10" width="5" height="5" fill-opacity="0.34"/><rect x="95" y="10" width="5" height="5" fill-opacity="0.13"/><rect x="100" y="10" width="5" height="5" fill-opacity="0.22"/><rect x="105" y="10" width="5" height="5" fill-opacity="0.24"/><rect x="110" y="10" width="5" height="5" fill-opacity="0.34"/><rect x="115" y="10" width="5" height="5" fill-opacity="0.25"/><rect x="120" y="10" width="5" height="5" fill-opacity="0.17"/><rect x="125" y="10" width="5" height="5" fill-opacity="0.18"/><rect x="130" y="10" width="5" height="5" fill-opacity="0.10"/><rect x="135" y="10" width="5" height="5" fill-opacity="0.34"/><rect x="140" y="10" width="5" height="5" fill-opacity="0.35"/><rect x="145" y="10" width="5" height="5" fill-opacity="0.12"/><rect x="150" y="10" width="5" height="5" fill-opacity="0.06"/></g></svg><svg class="mz" style="left:1198px;top:673px" width="30" height="15"><g fill="#888"><rect x="0" y="0" width="5" height="5" fill-opacity="0.13"/><rect x="5" y="0" width="5" height="5" fill-opacity="0.16"/><rect x="10" y="0" width="5" height="5" fill-opacity="0.32"/><rect x="15" y="0" width="5" height="5" fill-opacity="0.32"/><rect x="20" y="0" width="5" height="5" fill-opacity="0.30"/><rect x="25" y="0" width="5" height="5" fill-opacity="0.06"/><rect x="0" y="5" width="5" height="5" fill-opacity="0.80"/><rect x="5" y="5" width="5" height="5" fill-opacity="0.77"/><rect x="10" y="5" width="5" height="5" fill-opacity="0.74"/><rect x="15" y="5" width="5" height="5" fill-opacity="0.89"/><rect x="20" y="5" width="5" height="5" fill-opacity="0.48"/><rect x="25" y="5" width="5" height="5" fill-opacity="0.52"/><rect x="0" y="10" width="5" height="5" fill-opacity="0.28"/><rect x="5" y="10" width="5" height="5" fill-opacity="0.33"/><rect x="10" y="10" width="5" height="5" fill-opacity="0.25"/><rect x="15" y="10" width="5" height="5" fill-opacity="0.14"/><rect x="20" y="10" width="5" height="5" fill-opacity="0.23"/><rect x="25" y="10" width="5" height="5" fill-opacity="0.28"/></g></svg><div class="abs" style="left:1639px;top:0;width:2px;height:701px;background:#c4c4c4"></div><div class="abs" style="left:0;top:699px;width:1641px;height:2px;background:#c4c4c4"></div></body></html>
